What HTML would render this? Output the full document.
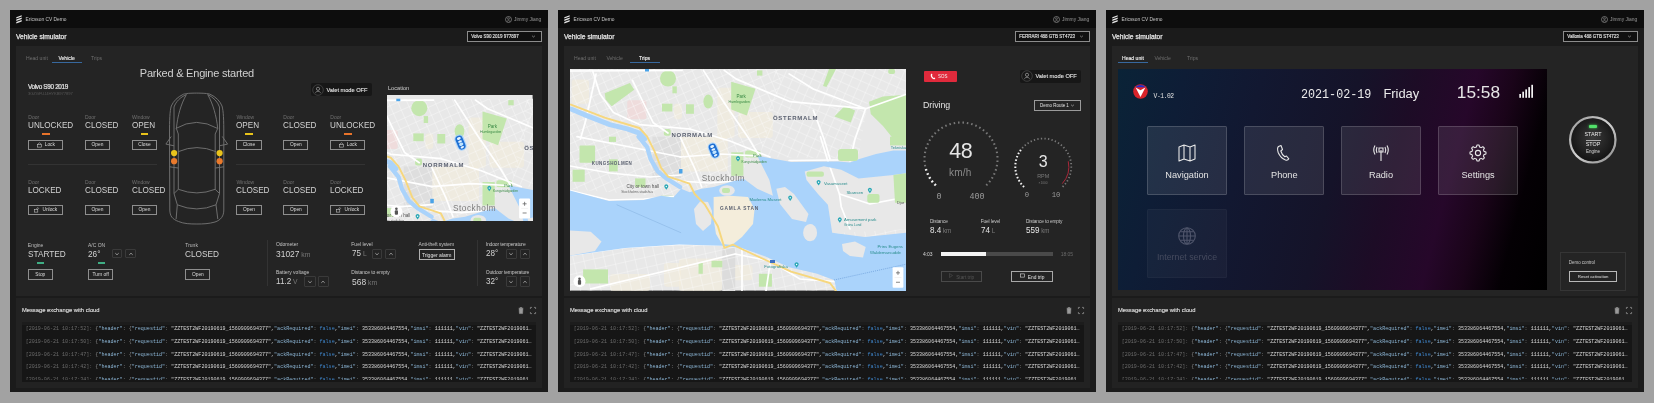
<!DOCTYPE html><html><head><meta charset="utf-8"><style>

*{margin:0;padding:0;box-sizing:border-box;-webkit-font-smoothing:antialiased}
html,body{width:1654px;height:403px;overflow:hidden;background:#a2a2a2;font-family:'Liberation Sans', sans-serif} .p{will-change:transform}
.p{position:absolute;top:10px;width:538px;height:382px;background:#1b1b1b;overflow:hidden}
.t{position:absolute;white-space:nowrap;line-height:1}
.r{position:absolute}
svg{position:absolute;overflow:visible} svg text{font-family:'Liberation Sans',sans-serif}
.btn{position:absolute;border:1px solid #9a9a9a;color:#ddd;font-size:4.3px;white-space:nowrap;display:flex;align-items:center;justify-content:center;line-height:1;padding-top:1.4px} .btn svg{position:relative !important;top:-0.9px}
.log{position:absolute;font-family:'Liberation Mono', monospace;font-size:5.05px;color:#d8d8d8;white-space:pre;line-height:7px}
.g{color:#6c6c6c} .k{color:#8cb6d6} .b{color:#3f86cc} .pu{color:#8a8a8a}

</style></head><body>
<div class="p" style="left:10px">
<div class="r" style="left:0px;top:0px;width:538px;height:18px;background:#0d0d0d"></div>
<svg style="left:6px;top:4.5px" width="6" height="9" viewBox="0 0 6 9"><path d="M0.3 2.2 L5.7 0.2 L5.7 1.6 L0.3 3.6Z M0.3 4.6 L5.7 2.6 L5.7 4.0 L0.3 6.0Z M0.3 7.0 L5.7 5.0 L5.7 6.4 L0.3 8.4Z" fill="#e6e6e6"/></svg>
<div class="t" style="left:15.6px;top:7.5px;font-size:4.85px;color:#c8c8c8;font-weight:normal;font-family:'Liberation Sans', sans-serif;">Ericsson CV Demo</div>
<svg style="left:494.8px;top:6.2px" width="7" height="7" viewBox="0 0 7 7"><circle cx="3.5" cy="3.5" r="3" fill="none" stroke="#9a9a9a" stroke-width="0.65"/><circle cx="3.5" cy="2.7" r="0.9" fill="none" stroke="#9a9a9a" stroke-width="0.55"/><path d="M2 5.3 Q3.5 3.9 5 5.3" fill="none" stroke="#9a9a9a" stroke-width="0.55"/></svg>
<div class="t" style="left:504px;top:7.8px;font-size:4.9px;color:#9a9a9a;font-weight:normal;font-family:'Liberation Sans', sans-serif;">Jimmy Jiang</div>
<div class="t" style="left:6px;top:23.9px;font-size:6.7px;color:#e4e4e4;font-weight:normal;font-family:'Liberation Sans', sans-serif;-webkit-text-stroke:0.25px #e4e4e4">Vehicle simulator</div>
<div class="r" style="left:457px;top:21.2px;width:75px;height:11.2px;background:#101010;border:1px solid #8c8c8c"></div>
<div class="t" style="left:461.3px;top:24.6px;font-size:4.5px;color:#e6e6e6;font-weight:normal;font-family:'Liberation Sans', sans-serif;-webkit-text-stroke:0.12px #e6e6e6;letter-spacing:-0.02px">Volvo S90 2019 977897</div>
<svg style="left:521px;top:25.2px" width="5" height="3" viewBox="0 0 5 3"><path d="M1.1 0.8 L2.5 2 L3.9 0.8" fill="none" stroke="#bbb" stroke-width="0.6"/></svg>
<div class="r" style="left:6px;top:36px;width:526px;height:250.3px;background:#242424"></div>
<div class="t" style="left:16px;top:45.6px;font-size:5.1px;color:#6e6e6e;font-weight:normal;font-family:'Liberation Sans', sans-serif;">Head unit</div>
<div class="t" style="left:48.4px;top:45.6px;font-size:5.1px;color:#f0f0f0;font-weight:normal;font-family:'Liberation Sans', sans-serif;-webkit-text-stroke:0.12px #f0f0f0">Vehicle</div>
<div class="r" style="left:41.599999999999994px;top:52.3px;width:30px;height:1.1px;background:#37689e"></div>
<div class="t" style="left:81px;top:45.6px;font-size:5.1px;color:#6e6e6e;font-weight:normal;font-family:'Liberation Sans', sans-serif;">Trips</div>
<div class="r" style="left:6px;top:288px;width:526px;height:90px;background:#222"></div>
<div class="t" style="left:11.9px;top:297.8px;font-size:5.8px;color:#dcdcdc;font-weight:normal;font-family:'Liberation Sans', sans-serif;-webkit-text-stroke:0.15px #dcdcdc">Message exchange with cloud</div>
<svg style="left:507.5px;top:296.8px" width="6" height="7" viewBox="0 0 6 7"><path d="M0.6 1.2 H5.4 M2.2 1.2 V0.5 H3.8 V1.2 M1.1 1.6 H4.9 L4.6 6.6 H1.4Z" fill="#9a9a9a" stroke="#9a9a9a" stroke-width="0.5"/></svg>
<svg style="left:520px;top:297px" width="6" height="7" viewBox="0 0 6 7"><path d="M0.4 2 V0.4 H2 M4 0.4 H5.6 V2 M5.6 5 V6.6 H4 M2 6.6 H0.4 V5" fill="none" stroke="#9a9a9a" stroke-width="0.7"/></svg>
<div class="r" style="left:12.3px;top:312.4px;width:513.3px;height:59.6px;background:#161616;overflow:hidden"></div>
<div class="r" style="left:12.3px;top:312.4px;width:513.3px;height:2.2px;background:#1c1c1c"></div>
<div class="log" style="left:15.7px;top:316.30px;width:506px;overflow:hidden"><span class="g">[2019-06-21 10:17:52]:</span> <span class="pu">{</span><span class="k">"header"</span><span class="pu">:</span> <span class="pu">{</span><span class="k">"requestid"</span><span class="pu">:</span> "ZZTEST2WF20190619_1560909694377",<span class="k">"ackRequired"</span><span class="pu">:</span> <span class="b">false</span>,<span class="k">"imei"</span><span class="pu">:</span> 353386064467554,<span class="k">"imsi"</span><span class="pu">:</span> 111111,<span class="k">"vin"</span><span class="pu">:</span> "ZZTEST2WF2019061…</div>
<div class="log" style="left:15.7px;top:328.95px;width:506px;overflow:hidden"><span class="g">[2019-06-21 10:17:50]:</span> <span class="pu">{</span><span class="k">"header"</span><span class="pu">:</span> <span class="pu">{</span><span class="k">"requestid"</span><span class="pu">:</span> "ZZTEST2WF20190619_1560909694377",<span class="k">"ackRequired"</span><span class="pu">:</span> <span class="b">false</span>,<span class="k">"imei"</span><span class="pu">:</span> 353386064467554,<span class="k">"imsi"</span><span class="pu">:</span> 111111,<span class="k">"vin"</span><span class="pu">:</span> "ZZTEST2WF2019061…</div>
<div class="log" style="left:15.7px;top:341.60px;width:506px;overflow:hidden"><span class="g">[2019-06-21 10:17:47]:</span> <span class="pu">{</span><span class="k">"header"</span><span class="pu">:</span> <span class="pu">{</span><span class="k">"requestid"</span><span class="pu">:</span> "ZZTEST2WF20190619_1560909694377",<span class="k">"ackRequired"</span><span class="pu">:</span> <span class="b">false</span>,<span class="k">"imei"</span><span class="pu">:</span> 353386064467554,<span class="k">"imsi"</span><span class="pu">:</span> 111111,<span class="k">"vin"</span><span class="pu">:</span> "ZZTEST2WF2019061…</div>
<div class="log" style="left:15.7px;top:354.25px;width:506px;overflow:hidden"><span class="g">[2019-06-21 10:17:42]:</span> <span class="pu">{</span><span class="k">"header"</span><span class="pu">:</span> <span class="pu">{</span><span class="k">"requestid"</span><span class="pu">:</span> "ZZTEST2WF20190619_1560909694377",<span class="k">"ackRequired"</span><span class="pu">:</span> <span class="b">false</span>,<span class="k">"imei"</span><span class="pu">:</span> 353386064467554,<span class="k">"imsi"</span><span class="pu">:</span> 111111,<span class="k">"vin"</span><span class="pu">:</span> "ZZTEST2WF2019061…</div>
<div class="log" style="left:15.7px;top:366.90px;width:506px;overflow:hidden"><span class="g">[2019-06-21 10:17:34]:</span> <span class="pu">{</span><span class="k">"header"</span><span class="pu">:</span> <span class="pu">{</span><span class="k">"requestid"</span><span class="pu">:</span> "ZZTEST2WF20190619_1560909694377",<span class="k">"ackRequired"</span><span class="pu">:</span> <span class="b">false</span>,<span class="k">"imei"</span><span class="pu">:</span> 353386064467554,<span class="k">"imsi"</span><span class="pu">:</span> 111111,<span class="k">"vin"</span><span class="pu">:</span> "ZZTEST2WF2019061…</div>
<div class="r" style="left:12.3px;top:369.5px;width:513.3px;height:2.5px;background:#161616"></div>
<div class="r" style="left:6px;top:372px;width:526px;height:6px;background:#222"></div>
<div class="t" style="left:129.8px;top:57.77px;font-size:11px;color:#d0d0d0;font-weight:normal;font-family:'Liberation Sans', sans-serif;letter-spacing:-0.22px">Parked &amp; Engine started</div>
<div class="r" style="left:300.6px;top:72.7px;width:61.2px;height:13.6px;background:#171717;border-radius:2px"></div>
<svg style="left:302px;top:73.5px" width="12" height="12" viewBox="0 0 12 12"><circle cx="6" cy="6" r="5.3" fill="none" stroke="#555" stroke-width="0.6"/><circle cx="6" cy="4.8" r="1.6" fill="none" stroke="#bbb" stroke-width="0.6"/><path d="M3.3 8.8 Q6 5.6 8.7 8.8" fill="none" stroke="#bbb" stroke-width="0.6"/></svg>
<div class="t" style="left:316.5px;top:77.66px;font-size:5.7px;color:#e4e4e4;font-weight:normal;font-family:'Liberation Sans', sans-serif;letter-spacing:-0.02px;-webkit-text-stroke:0.1px #e4e4e4">Valet mode OFF</div>
<div class="t" style="left:17.9px;top:73.67px;font-size:6.4px;color:#e4e4e4;font-weight:normal;font-family:'Liberation Sans', sans-serif;letter-spacing:-0.33px;-webkit-text-stroke:0.2px #e4e4e4">Volvo S90 2019</div>
<div class="t" style="left:18px;top:81.95px;font-size:4.2px;color:#555;font-weight:normal;font-family:'Liberation Sans', sans-serif;letter-spacing:-0.12px">3GZGFUJ4HYKB977897</div>
<div class="t" style="left:18.3px;top:105.15px;font-size:5.0px;color:#707070;font-weight:normal;font-family:'Liberation Sans', sans-serif;">Door</div>
<div class="t" style="left:18.3px;top:110.24px;font-size:9.7px;color:#d2d2d2;font-weight:normal;font-family:'Liberation Sans', sans-serif;transform:scaleX(0.84);transform-origin:0 0;">UNLOCKED</div>
<div class="r" style="left:31.9px;top:123.3px;width:7.8px;height:1.6px;background:#e8732a"></div>
<div class="btn" style="left:18.3px;top:129.6px;width:35px;height:10.8px;border-color:#8e8e8e;color:#dedede;font-size:4.8px"><svg style="position:static;margin-right:3px" width="5" height="5.5" viewBox="0 0 5 5.5"><rect x="0.6" y="2.3" width="3.8" height="2.8" fill="none" stroke="#ccc" stroke-width="0.55"/><path d="M1.4 2.3 V1.5 Q2.5 0 3.6 1.5 V2.3" fill="none" stroke="#ccc" stroke-width="0.55"/></svg><span>Lock</span></div>
<div class="t" style="left:74.9px;top:105.15px;font-size:5.0px;color:#707070;font-weight:normal;font-family:'Liberation Sans', sans-serif;">Door</div>
<div class="t" style="left:74.9px;top:110.24px;font-size:9.7px;color:#d2d2d2;font-weight:normal;font-family:'Liberation Sans', sans-serif;transform:scaleX(0.84);transform-origin:0 0;">CLOSED</div>
<div class="btn" style="left:74.9px;top:129.6px;width:25.2px;height:10.8px;border-color:#8e8e8e;color:#dedede;font-size:4.8px"><span>Open</span></div>
<div class="t" style="left:121.9px;top:105.15px;font-size:5.0px;color:#707070;font-weight:normal;font-family:'Liberation Sans', sans-serif;">Window</div>
<div class="t" style="left:121.9px;top:110.24px;font-size:9.7px;color:#d2d2d2;font-weight:normal;font-family:'Liberation Sans', sans-serif;transform:scaleX(0.84);transform-origin:0 0;">OPEN</div>
<div class="r" style="left:130.6px;top:123.3px;width:7.8px;height:1.6px;background:#e8c31a"></div>
<div class="btn" style="left:121.9px;top:129.6px;width:25.2px;height:10.8px;border-color:#8e8e8e;color:#dedede;font-size:4.8px"><span>Close</span></div>
<div class="t" style="left:226.4px;top:105.15px;font-size:5.0px;color:#707070;font-weight:normal;font-family:'Liberation Sans', sans-serif;">Window</div>
<div class="t" style="left:226.4px;top:110.24px;font-size:9.7px;color:#d2d2d2;font-weight:normal;font-family:'Liberation Sans', sans-serif;transform:scaleX(0.84);transform-origin:0 0;">OPEN</div>
<div class="r" style="left:235.1px;top:123.3px;width:7.8px;height:1.6px;background:#e8c31a"></div>
<div class="btn" style="left:226.4px;top:129.6px;width:25.2px;height:10.8px;border-color:#8e8e8e;color:#dedede;font-size:4.8px"><span>Close</span></div>
<div class="t" style="left:273.3px;top:105.15px;font-size:5.0px;color:#707070;font-weight:normal;font-family:'Liberation Sans', sans-serif;">Door</div>
<div class="t" style="left:273.3px;top:110.24px;font-size:9.7px;color:#d2d2d2;font-weight:normal;font-family:'Liberation Sans', sans-serif;transform:scaleX(0.84);transform-origin:0 0;">CLOSED</div>
<div class="btn" style="left:273.3px;top:129.6px;width:25.2px;height:10.8px;border-color:#8e8e8e;color:#dedede;font-size:4.8px"><span>Open</span></div>
<div class="t" style="left:320.3px;top:105.15px;font-size:5.0px;color:#707070;font-weight:normal;font-family:'Liberation Sans', sans-serif;">Door</div>
<div class="t" style="left:320.3px;top:110.24px;font-size:9.7px;color:#d2d2d2;font-weight:normal;font-family:'Liberation Sans', sans-serif;transform:scaleX(0.84);transform-origin:0 0;">UNLOCKED</div>
<div class="r" style="left:333.90000000000003px;top:123.3px;width:7.8px;height:1.6px;background:#e8732a"></div>
<div class="btn" style="left:320.3px;top:129.6px;width:35px;height:10.8px;border-color:#8e8e8e;color:#dedede;font-size:4.8px"><svg style="position:static;margin-right:3px" width="5" height="5.5" viewBox="0 0 5 5.5"><rect x="0.6" y="2.3" width="3.8" height="2.8" fill="none" stroke="#ccc" stroke-width="0.55"/><path d="M1.4 2.3 V1.5 Q2.5 0 3.6 1.5 V2.3" fill="none" stroke="#ccc" stroke-width="0.55"/></svg><span>Lock</span></div>
<div class="t" style="left:18.3px;top:170.45px;font-size:5.0px;color:#707070;font-weight:normal;font-family:'Liberation Sans', sans-serif;">Door</div>
<div class="t" style="left:18.3px;top:175.14px;font-size:9.7px;color:#d2d2d2;font-weight:normal;font-family:'Liberation Sans', sans-serif;transform:scaleX(0.84);transform-origin:0 0;">LOCKED</div>
<div class="btn" style="left:18.3px;top:194.5px;width:35px;height:10.8px;border-color:#8e8e8e;color:#dedede;font-size:4.8px"><svg style="position:static;margin-right:3px" width="5" height="5.5" viewBox="0 0 5 5.5"><rect x="0.4" y="2.3" width="3.4" height="2.8" fill="none" stroke="#ccc" stroke-width="0.55"/><path d="M2.8 2.3 V1.3 Q3.7 0 4.7 1.3 V1.8" fill="none" stroke="#ccc" stroke-width="0.55"/></svg><span>Unlock</span></div>
<div class="t" style="left:74.9px;top:170.45px;font-size:5.0px;color:#707070;font-weight:normal;font-family:'Liberation Sans', sans-serif;">Door</div>
<div class="t" style="left:74.9px;top:175.14px;font-size:9.7px;color:#d2d2d2;font-weight:normal;font-family:'Liberation Sans', sans-serif;transform:scaleX(0.84);transform-origin:0 0;">CLOSED</div>
<div class="btn" style="left:74.9px;top:194.5px;width:25.2px;height:10.8px;border-color:#8e8e8e;color:#dedede;font-size:4.8px"><span>Open</span></div>
<div class="t" style="left:121.9px;top:170.45px;font-size:5.0px;color:#707070;font-weight:normal;font-family:'Liberation Sans', sans-serif;">Window</div>
<div class="t" style="left:121.9px;top:175.14px;font-size:9.7px;color:#d2d2d2;font-weight:normal;font-family:'Liberation Sans', sans-serif;transform:scaleX(0.84);transform-origin:0 0;">CLOSED</div>
<div class="btn" style="left:121.9px;top:194.5px;width:25.2px;height:10.8px;border-color:#8e8e8e;color:#dedede;font-size:4.8px"><span>Open</span></div>
<div class="t" style="left:226.4px;top:170.45px;font-size:5.0px;color:#707070;font-weight:normal;font-family:'Liberation Sans', sans-serif;">Window</div>
<div class="t" style="left:226.4px;top:175.14px;font-size:9.7px;color:#d2d2d2;font-weight:normal;font-family:'Liberation Sans', sans-serif;transform:scaleX(0.84);transform-origin:0 0;">CLOSED</div>
<div class="btn" style="left:226.4px;top:194.5px;width:25.2px;height:10.8px;border-color:#8e8e8e;color:#dedede;font-size:4.8px"><span>Open</span></div>
<div class="t" style="left:273.3px;top:170.45px;font-size:5.0px;color:#707070;font-weight:normal;font-family:'Liberation Sans', sans-serif;">Door</div>
<div class="t" style="left:273.3px;top:175.14px;font-size:9.7px;color:#d2d2d2;font-weight:normal;font-family:'Liberation Sans', sans-serif;transform:scaleX(0.84);transform-origin:0 0;">CLOSED</div>
<div class="btn" style="left:273.3px;top:194.5px;width:25.2px;height:10.8px;border-color:#8e8e8e;color:#dedede;font-size:4.8px"><span>Open</span></div>
<div class="t" style="left:320.3px;top:170.45px;font-size:5.0px;color:#707070;font-weight:normal;font-family:'Liberation Sans', sans-serif;">Door</div>
<div class="t" style="left:320.3px;top:175.14px;font-size:9.7px;color:#d2d2d2;font-weight:normal;font-family:'Liberation Sans', sans-serif;transform:scaleX(0.84);transform-origin:0 0;">LOCKED</div>
<div class="btn" style="left:320.3px;top:194.5px;width:35px;height:10.8px;border-color:#8e8e8e;color:#dedede;font-size:4.8px"><svg style="position:static;margin-right:3px" width="5" height="5.5" viewBox="0 0 5 5.5"><rect x="0.4" y="2.3" width="3.4" height="2.8" fill="none" stroke="#ccc" stroke-width="0.55"/><path d="M2.8 2.3 V1.3 Q3.7 0 4.7 1.3 V1.8" fill="none" stroke="#ccc" stroke-width="0.55"/></svg><span>Unlock</span></div>
<div class="r" style="left:18.3px;top:153.6px;width:128.7px;height:0.7px;background:#333"></div>
<div class="r" style="left:226.4px;top:153.6px;width:128.7px;height:0.7px;background:#333"></div>
<svg style="left:153px;top:82px" width="66" height="134" viewBox="0 0 66 134">
<g fill="none" stroke="#727272" stroke-width="0.95" stroke-linejoin="round">
<path d="M33.5 1.1 C40 1.1 45 1.5 47 2.2 C53 5 57 9 59 14 C60.5 19 60.8 28 60.8 42 L60.8 118 C60.8 124 58 128 52 130 C46 131.8 40 132 33.9 132 C27 132 21 131.8 15.5 129.5 C9 127 7 124 6.8 118 L6.5 42 C6.5 28 6.8 19 8.3 14 C10.5 9 14.5 5 20.5 2.2 C22.5 1.5 27 1.1 33.5 1.1 Z"/>
<path d="M11 101.5 L11 15 C13 9.5 17 5.5 23.4 2.5"/><path d="M56.5 101.5 L56.5 15 C54.5 9.5 50.5 5.5 44.7 2.5"/>
<path d="M23.4 2.5 C18 12 14.5 24 13.4 36.5"/><path d="M44.7 2.5 C50 12 53.5 24 54.7 36.5"/>
<path d="M12.8 36.5 Q33.5 24.3 54.7 36.5"/>
<path d="M15.2 59.7 Q33.8 51.5 53.1 59.7"/>
<path d="M13.4 36.5 L15.3 42 L15.3 97.3"/><path d="M54.7 36.5 L52.2 42 L52.2 97.3"/>
<path d="M15.3 97.3 Q33.9 104.5 52.2 97.3"/>
<path d="M15.3 97.3 L11 101.5 L14.3 112.8 L13.1 127.1"/><path d="M52.2 97.3 L56.5 101.5 L53 112.8 L54.8 127.1"/>
<path d="M14.3 112.8 Q33.9 121 53 112.8"/>
<path d="M8.2 44.5 L2.9 52.1 L11.1 53.8"/><path d="M59.3 44.5 L64.6 52.1 L56.4 53.8"/>
<path d="M6.8 74.8 Q11 75.5 15.2 76"/><path d="M60.8 74.8 Q56.5 75.5 52.3 76"/>
</g>
<circle cx="11.1" cy="61.1" r="3.1" fill="#e9c31c"/><circle cx="56.6" cy="61.1" r="3.1" fill="#e9c31c"/>
<circle cx="11.1" cy="69.2" r="3.1" fill="#ea7a2c"/><circle cx="56.6" cy="69.2" r="3.1" fill="#ea7a2c"/>
</svg>
<div class="t" style="left:378px;top:75.67px;font-size:5.6px;color:#cfcfcf;font-weight:normal;font-family:'Liberation Sans', sans-serif;">Location</div>
<svg style="left:377.4px;top:85px;overflow:hidden" width="145.6" height="126" viewBox="0 0 145.6 126"><rect width="145.6" height="126" fill="#e8e8e8"/><g transform="translate(-65.7,3.7)"><defs><pattern id="m1g2a" patternUnits="userSpaceOnUse" width="8.5" height="8.5" patternTransform="rotate(-24)"><path d="M0 0 H8.5 M0 0 V8.5" stroke="#fafafa" stroke-width="0.8" fill="none"/></pattern><pattern id="m1g2b" patternUnits="userSpaceOnUse" width="9" height="9" patternTransform="rotate(24)"><path d="M0 0 H9 M0 0 V9" stroke="#fafafa" stroke-width="0.8" fill="none"/></pattern><pattern id="m1g2c" patternUnits="userSpaceOnUse" width="10" height="10" patternTransform="rotate(10)"><path d="M0 0 H10 M0 0 V10" stroke="#fafafa" stroke-width="0.8" fill="none"/></pattern><pattern id="m1g2d" patternUnits="userSpaceOnUse" width="10" height="10" patternTransform="rotate(-13)"><path d="M0 0 H10 M0 0 V10" stroke="#fafafa" stroke-width="0.8" fill="none"/></pattern><clipPath id="m1c2a"><polygon points="0,0 215,0 190,88 150,115 100,128 0,120"/></clipPath><clipPath id="m1c2b"><polygon points="205,0 337,0 337,26 298,33 288,90 190,88"/></clipPath><clipPath id="m1c2d"><polygon points="0,180 337,160 337,222 0,222"/></clipPath></defs><rect width="336" height="221.6" fill="#e8e8e8"/><rect x="147.3" y="18.8" width="17.30" height="50.30" fill="#f4eddb" rx="3" opacity="0.6"/><rect x="168.1" y="43.1" width="34.70" height="26.00" fill="#f4eddb" rx="3" opacity="0.6"/><rect x="110" y="67.7" width="47.70" height="34.70" fill="#f4eddb" rx="3" opacity="0.6"/><rect x="104" y="34.7" width="8.00" height="15.60" fill="#f4eddb" rx="3" opacity="0.6"/><rect x="1.7" y="10.4" width="17.30" height="24.30" fill="#f4eddb" rx="3" opacity="0.6"/><rect x="94" y="194" width="17.00" height="23.70" fill="#f4eddb" rx="3" opacity="0.6"/><rect x="109" y="189.6" width="43.00" height="32.40" fill="#f4eddb" rx="3" opacity="0.6"/><rect x="160.9" y="196.1" width="21.60" height="15.10" fill="#f4eddb" rx="3" opacity="0.6"/><rect x="40" y="205" width="40.00" height="17.00" fill="#f4eddb" rx="3" opacity="0.6"/><rect x="57.3" y="31.2" width="19.10" height="19.10" fill="#efdcdc" rx="2"/><rect x="82.4" y="67.7" width="28.60" height="41.70" fill="#dedede" /><rect x="152.3" y="178.9" width="12.90" height="43.10" fill="#dcdcdc" /><rect width="336" height="221.6" fill="url(#m1g2a)" clip-path="url(#m1c2a)"/><rect width="336" height="221.6" fill="url(#m1g2b)" clip-path="url(#m1c2b)"/><rect width="336" height="221.6" fill="url(#m1g2d)" clip-path="url(#m1c2d)"/><polygon points="34.7,24.3 59.9,13.9 64.2,20.8 41.7,37.3 35.6,30.4" fill="#c3e6ad" /><circle cx="98" cy="9.5" r="8" fill="#c3e6ad"/><rect x="102.4" y="17.4" width="4.40" height="6.90" fill="#c3e6ad" /><rect x="92" y="34.7" width="10.40" height="7.80" fill="#c3e6ad" /><rect x="93.8" y="59.9" width="6.90" height="6.90" fill="#c3e6ad" rx="2"/><polygon points="161.2,12.7 185.5,19.7 176.8,46.6 161.2,40.5" fill="#c3e6ad" /><ellipse cx="138.2" cy="32.6" rx="4.8" ry="7" fill="#c3e6ad"/><rect x="116" y="35.3" width="7.90" height="9.50" fill="#c3e6ad" /><rect x="187" y="1.4" width="5.40" height="5.20" fill="#c3e6ad" /><polygon points="299,32.7 312.9,27.5 337,25.8 337,70 323.4,70 313,57 300.8,44.9" fill="#c3e6ad" /><polygon points="274.7,37.1 285.1,41.4 280.8,53.6 264.3,47.5" fill="#c3e6ad" /><polygon points="259,0 266,0 256.5,18 253,17.1" fill="#c3e6ad" /><rect x="318.2" y="0" width="6.90" height="5.00" fill="#c3e6ad" rx="2"/><rect x="9.5" y="76.4" width="15.60" height="17.30" fill="#c3e6ad" rx="1"/><rect x="2.6" y="100.7" width="12.10" height="12.10" fill="#c3e6ad" /><rect x="39" y="90.3" width="8.70" height="12.10" fill="#c3e6ad" /><rect x="65.1" y="109.4" width="10.40" height="8.70" fill="#c3e6ad" /><rect x="39" y="67.7" width="7.00" height="5.20" fill="#c3e6ad" /><rect x="91.1" y="126.7" width="12.20" height="3.50" fill="#c3e6ad" /><rect x="161.2" y="83.3" width="12.20" height="23.50" fill="#c3e6ad" /><rect x="175.1" y="81.6" width="15.60" height="6.90" fill="#c3e6ad" rx="2"/><rect x="320" y="67.7" width="17.00" height="8.70" fill="#c3e6ad" /><rect x="13.1" y="200.4" width="24.90" height="14.10" fill="#c3e6ad" /><rect x="128.5" y="194" width="4.30" height="10.80" fill="#c3e6ad" /><rect x="141.5" y="191.8" width="10.80" height="6.50" fill="#c3e6ad" /><rect x="188.9" y="204.8" width="13.00" height="12.90" fill="#c3e6ad" /><polyline points="0,2 112,1.5" fill="none" stroke="#ffffff" stroke-width="1.7" stroke-linejoin="round" stroke-linecap="round" /><polyline points="22.6,1.7 30,25 43.4,43.4 69.4,55.6 90.3,57.3 120,60" fill="none" stroke="#ffffff" stroke-width="1.7" stroke-linejoin="round" stroke-linecap="round" /><polyline points="26,5.2 15.6,52 10.4,70" fill="none" stroke="#ffffff" stroke-width="1.7" stroke-linejoin="round" stroke-linecap="round" /><polyline points="62.5,11.3 76.4,40 83.3,53.8 98,64" fill="none" stroke="#ffffff" stroke-width="1.7" stroke-linejoin="round" stroke-linecap="round" /><polyline points="133.4,1.4 155,35 178.5,69.1 190,88" fill="none" stroke="#ffffff" stroke-width="1.7" stroke-linejoin="round" stroke-linecap="round" /><polyline points="154.2,1.4 166.4,10.1 220.2,32.7 295.6,39.7" fill="none" stroke="#ffffff" stroke-width="1.7" stroke-linejoin="round" stroke-linecap="round" /><polyline points="219.1,4.9 243.4,20 295.6,39.7 337,25" fill="none" stroke="#ffffff" stroke-width="1.7" stroke-linejoin="round" stroke-linecap="round" /><polyline points="243.4,41.4 253.9,69.7 260,90" fill="none" stroke="#ffffff" stroke-width="1.7" stroke-linejoin="round" stroke-linecap="round" /><polyline points="295.6,39.7 285.1,69.7 280,92" fill="none" stroke="#ffffff" stroke-width="1.7" stroke-linejoin="round" stroke-linecap="round" /><polyline points="0,97 40,104 80,108 111,106" fill="none" stroke="#ffffff" stroke-width="1.7" stroke-linejoin="round" stroke-linecap="round" /><polyline points="7,67.7 60,78 111,88" fill="none" stroke="#ffffff" stroke-width="1.7" stroke-linejoin="round" stroke-linecap="round" /><polyline points="0,121.5 39,131 73.8,130 103.3,127.5" fill="none" stroke="#ffffff" stroke-width="1.7" stroke-linejoin="round" stroke-linecap="round" /><polyline points="120,60 160,72 200,88" fill="none" stroke="#ffffff" stroke-width="1.7" stroke-linejoin="round" stroke-linecap="round" /><polyline points="110,88 150,85 187,86.8" fill="none" stroke="#ffffff" stroke-width="1.7" stroke-linejoin="round" stroke-linecap="round" /><polyline points="109,112 140,114 165,112" fill="none" stroke="#ffffff" stroke-width="1.7" stroke-linejoin="round" stroke-linecap="round" /><polyline points="219.1,91.5 267.8,91" fill="none" stroke="#ffffff" stroke-width="1.7" stroke-linejoin="round" stroke-linecap="round" /><polyline points="250.4,67.7 257.3,90.3 269.5,125.1 271.2,137.7 280,160" fill="none" stroke="#ffffff" stroke-width="1.7" stroke-linejoin="round" stroke-linecap="round" /><polyline points="269.5,125 300,135 337,128" fill="none" stroke="#ffffff" stroke-width="1.7" stroke-linejoin="round" stroke-linecap="round" /><polyline points="2.3,186 55.2,178.5 111.1,175.2 152,176" fill="none" stroke="#ffffff" stroke-width="1.7" stroke-linejoin="round" stroke-linecap="round" /><polyline points="20.7,219.9 111.1,198.3 165,185" fill="none" stroke="#ffffff" stroke-width="1.7" stroke-linejoin="round" stroke-linecap="round" /><polyline points="165.2,185 200,192 230,210 337,218" fill="none" stroke="#ffffff" stroke-width="1.7" stroke-linejoin="round" stroke-linecap="round" /><polyline points="172,178 172,222" fill="none" stroke="#ffffff" stroke-width="1.7" stroke-linejoin="round" stroke-linecap="round" /><polyline points="200,195 196,222" fill="none" stroke="#ffffff" stroke-width="1.7" stroke-linejoin="round" stroke-linecap="round" /><polyline points="110,67.7 125,100 131.7,118" fill="none" stroke="#ffffff" stroke-width="1.7" stroke-linejoin="round" stroke-linecap="round" /><polyline points="143.8,120 155,140 172,168" fill="none" stroke="#ffffff" stroke-width="1.7" stroke-linejoin="round" stroke-linecap="round" /><polygon points="0,121.5 20,127 39,132 73.8,131.1 91.1,126.7 103.3,128.5 111.1,119.8 119.5,123.3 131.7,119.8 143.8,118.1 161.2,112.8 173.4,109.4 187.2,119.8 202.9,126.7 199.4,111.1 190.7,93.7 187.2,86.8 221.1,92.9 267.8,92.5 280,93.5 288.6,90.3 306,85.1 323.4,81.6 337,81.6 337,104.2 323.4,105.9 306,107.7 288.6,109.4 271.2,100.7 253.9,97.2 234.7,102.5 236.5,111.1 248,125 257.9,135.7 262.2,163.7 294.6,168 314,165.9 337,163.7 337,222 266.6,222 264.4,211.2 247.1,204.7 219.1,198.3 195.4,187.5 171.7,178.9 152.3,176.7 109.1,175.6 55.2,178.9 2.3,186.4 0,186.4" fill="#aad3fb" /><polyline points="68.5,67.7 77.2,78.1 80.7,90.3 87.7,102.4 96.3,109.4 110.2,118.1" fill="none" stroke="#aad3fb" stroke-width="4.3" stroke-linejoin="round" stroke-linecap="round" /><polyline points="0.9,40 17.4,46.9 39.9,55.6 57.3,59.9 69.4,64.2 74.7,70" fill="none" stroke="#aad3fb" stroke-width="5" stroke-linejoin="round" stroke-linecap="round" /><polygon points="0,161.6 20.7,162.7 31.5,172.4 25,182.1 7.7,185.3 0,186.4" fill="#e8e8e8" /><polygon points="124,140 130,132.5 138,133 142,142 141,155 133,162 126,155" fill="#e8e8e8" /><ellipse cx="157" cy="121.5" rx="7.8" ry="5.2" fill="#e8e8e8"/><rect x="152" y="119" width="8.00" height="5.00" fill="#c3e6ad" rx="2"/><polygon points="143.6,128 160,126.7 178,128 184.6,140 183,155 172,168 162,176 152,175 146,165 143.6,150" fill="#f4eddb" /><polygon points="206.3,119.8 215,118 224,125 238.5,145 236,153 222,150 210,135" fill="#e8e8e8" /><ellipse cx="240.1" cy="163.7" rx="7" ry="8.6" fill="#e8e8e8"/><polygon points="272,175 285,172.4 295.7,178 293,188.5 280,187 273,182" fill="#e8e8e8" /><rect x="236.5" y="102.5" width="17.40" height="5.20" fill="#c3e6ad" rx="2"/><rect x="297.3" y="125.1" width="12.20" height="8.60" fill="#c3e6ad" rx="2"/><polygon points="323.4,106 337,104.2 337,133.7 325,133.7" fill="#c3e6ad" /><rect x="268" y="80" width="20.00" height="12.00" fill="#c3e6ad" rx="3"/><polyline points="0.9,35.6 34.7,48.6 69.4,59 77.2,67.7 84.2,81.6 91.1,98.9 98.1,107.6 109.1,111.1 119.5,114.6 124.7,125 135,135.7 147.9,157.3 154.4,178.9 163,175.6 173.8,181 221.1,202.6 260,214 266,222" fill="none" stroke="#f6d77e" stroke-width="1.9" stroke-linejoin="round" stroke-linecap="round" /><path d="M46.6 135.7 L111.1 163.8" stroke="#7aa6d6" stroke-width="0.4" fill="none"/><path d="M264 211 L337 195" stroke="#5a8fd0" stroke-width="0.6" stroke-dasharray="1 1" fill="none"/><text x="101.5" y="68" font-family="Liberation Sans" font-size="6.0" fill="#5b6170" font-weight="bold" letter-spacing="0.75" text-anchor="start">NORRMALM</text><text x="21.7" y="96.4" font-family="Liberation Sans" font-size="4.5" fill="#5b6170" font-weight="bold" letter-spacing="0.45" text-anchor="start">KUNGSHOLMEN</text><text x="202.9" y="51.4" font-family="Liberation Sans" font-size="6.0" fill="#5b6170" font-weight="bold" letter-spacing="0.75" text-anchor="start">ÖSTERMALM</text><text x="131.7" y="112.5" font-family="Liberation Sans" font-size="8.2" fill="#7b7b7b" font-weight="normal" letter-spacing="0.55" text-anchor="start">Stockholm</text><text x="150.1" y="140.8" font-family="Liberation Sans" font-size="4.8" fill="#5b6170" font-weight="bold" letter-spacing="0.75" text-anchor="start">GAMLA STAN</text><text x="166.4" y="29.5" font-family="Liberation Sans" font-size="4.6" fill="#3a8a45" font-weight="normal" letter-spacing="0" text-anchor="start">Park</text><text x="158.6" y="34.2" font-family="Liberation Sans" font-size="3.6" fill="#3a8a45" font-weight="normal" letter-spacing="0" text-anchor="start">Humlegården</text><text x="182.9" y="88.4" font-family="Liberation Sans" font-size="4.2" fill="#3a8a45" font-weight="normal" letter-spacing="0" text-anchor="start">Park</text><text x="171.6" y="93.6" font-family="Liberation Sans" font-size="3.3" fill="#3a8a45" font-weight="normal" letter-spacing="0" text-anchor="start">Kungsträdgården</text><text x="56.4" y="118.8" font-family="Liberation Sans" font-size="4.6" fill="#555" font-weight="normal" letter-spacing="0" text-anchor="start">City or town hall</text><text x="51.2" y="123.6" font-family="Liberation Sans" font-size="3.4" fill="#666" font-weight="normal" letter-spacing="0" text-anchor="start">Stockholms stadshus</text><text x="179.4" y="131.8" font-family="Liberation Sans" font-size="4.3" fill="#2a8d8d" font-weight="normal" letter-spacing="0" text-anchor="start">Moderna Museet</text><text x="253.9" y="116.2" font-family="Liberation Sans" font-size="4.3" fill="#2a8d8d" font-weight="normal" letter-spacing="0" text-anchor="start">Vasamuseet</text><text x="276.5" y="124.6" font-family="Liberation Sans" font-size="4.3" fill="#2a8d8d" font-weight="normal" letter-spacing="0" text-anchor="start">Skansen</text><text x="274.1" y="152.4" font-family="Liberation Sans" font-size="4.3" fill="#2a8d8d" font-weight="normal" letter-spacing="0" text-anchor="start">Amusement park</text><text x="274" y="156.8" font-family="Liberation Sans" font-size="3.3" fill="#2a8d8d" font-weight="normal" letter-spacing="0" text-anchor="start">Gröna Lund</text><text x="307.5" y="178.8" font-family="Liberation Sans" font-size="4.3" fill="#2a8d8d" font-weight="normal" letter-spacing="0" text-anchor="start">Prins Eugens</text><text x="300" y="184.8" font-family="Liberation Sans" font-size="4.3" fill="#2a8d8d" font-weight="normal" letter-spacing="0" text-anchor="start">Waldemarsudde</text><text x="194.3" y="198.8" font-family="Liberation Sans" font-size="4.3" fill="#2a8d8d" font-weight="normal" letter-spacing="0" text-anchor="start">Fotografiska</text><text x="320.8" y="80.5" font-family="Liberation Sans" font-size="4" fill="#2a8d8d" font-weight="normal" letter-spacing="0" text-anchor="start">Tekniska</text><text x="326.9" y="135.3" font-family="Liberation Sans" font-size="4" fill="#555" font-weight="normal" letter-spacing="0" text-anchor="start">Djur</text><path d="M96.3 120.69999999999999 L94.7 118.5 A2 2 0 1 1 97.89999999999999 118.5 Z" fill="#2aa7b5"/><circle cx="96.3" cy="117.5" r="0.7" fill="#fff"/><path d="M220.2 131.9 L218.6 129.70000000000002 A2 2 0 1 1 221.79999999999998 129.70000000000002 Z" fill="#2aa7b5"/><circle cx="220.2" cy="128.70000000000002" r="0.7" fill="#fff"/><path d="M248.6 116.39999999999999 L247.0 114.2 A2 2 0 1 1 250.2 114.2 Z" fill="#2aa7b5"/><circle cx="248.6" cy="113.2" r="0.7" fill="#fff"/><path d="M299.9 124.19999999999999 L298.29999999999995 122.0 A2 2 0 1 1 301.5 122.0 Z" fill="#2aa7b5"/><circle cx="299.9" cy="121.0" r="0.7" fill="#fff"/><path d="M269.8 153.79999999999998 L268.2 151.6 A2 2 0 1 1 271.40000000000003 151.6 Z" fill="#2aa7b5"/><circle cx="269.8" cy="150.6" r="0.7" fill="#fff"/><path d="M226.6 198.7 L225.0 196.5 A2 2 0 1 1 228.2 196.5 Z" fill="#2aa7b5"/><circle cx="226.6" cy="195.5" r="0.7" fill="#fff"/><path d="M168 92.6 L166.4 90.4 A2 2 0 1 1 169.6 90.4 Z" fill="#2aa7b5"/><circle cx="168" cy="89.4" r="0.7" fill="#fff"/><rect x="109" y="100" width="3.50" height="4.50" fill="#4aa3e8" rx="0.5"/><rect x="75" y="0" width="4.00" height="2.50" fill="#4aa3e8" /><rect x="200" y="191" width="5.00" height="3.00" fill="#3f6fc0" /></g><g transform="translate(73.5,47.6) rotate(-22) scale(1.0)"><rect x="-4.8" y="-8.3" width="9.6" height="16.6" rx="4.6" fill="#9fd0ff" opacity="0.85"/><rect x="-3.7" y="-7.2" width="7.4" height="14.4" rx="3.6" fill="#1f6fd2"/><ellipse cx="0" cy="-4.4" rx="2" ry="1.3" fill="#e6f4ff"/><ellipse cx="0" cy="-1.2" rx="2" ry="1.1" fill="#e6f4ff"/><ellipse cx="0" cy="1.8" rx="2.2" ry="1.6" fill="#bfe4ff"/><ellipse cx="0" cy="5" rx="1.8" ry="1" fill="#e6f4ff"/></g><circle cx="9.4" cy="116.4" r="6" fill="#fff"/><circle cx="9.4" cy="113.80000000000001" r="1.3" fill="#555"/><rect x="7.800000000000001" y="115.2" width="3.2" height="4.6" rx="1" fill="#555"/><rect x="132.1" y="103.4" width="11" height="20" rx="1" fill="#fff"/><path d="M135.6 108.80000000000001 h4 M137.6 106.80000000000001 v4 M135.6 118.0 h4" stroke="#666" stroke-width="0.8"/><path d="M134.1 113.4 h7" stroke="#e6e6e6" stroke-width="0.5"/></svg>
<div class="t" style="left:17.8px;top:232.65px;font-size:5.0px;color:#bdbdbd;font-weight:normal;font-family:'Liberation Sans', sans-serif;">Engine</div>
<div class="t" style="left:17.8px;top:238.95px;font-size:9.6px;color:#d2d2d2;font-weight:normal;font-family:'Liberation Sans', sans-serif;transform:scaleX(0.86);transform-origin:0 0;">STARTED</div>
<div class="r" style="left:26.5px;top:252.0px;width:7.6px;height:1.6px;background:#3fae84"></div>
<div class="btn" style="left:17.8px;top:258.8px;width:25px;height:10.9px;border-color:#8e8e8e;color:#dedede;font-size:4.8px"><span>Stop</span></div>
<div class="t" style="left:78px;top:232.65px;font-size:5.0px;color:#bdbdbd;font-weight:normal;font-family:'Liberation Sans', sans-serif;">A/C ON</div>
<div class="t" style="left:78px;top:238.95px;font-size:9.6px;color:#d2d2d2;font-weight:normal;font-family:'Liberation Sans', sans-serif;transform:scaleX(0.86);transform-origin:0 0;">26°</div>
<div class="r" style="left:101.9px;top:239px;width:10.4px;height:9.3px;border:1px solid #3a3a3a;border-radius:1px"></div><svg style="left:107.10000000000001px;top:243.65px" width="1" height="1"><path d="M-1.7 -0.8 L0 0.8 L1.7 -0.8" fill="none" stroke="#b8b8b8" stroke-width="0.75"/></svg>
<div class="r" style="left:115.4px;top:239px;width:10.8px;height:9.3px;border:1px solid #3a3a3a;border-radius:1px"></div><svg style="left:120.80000000000001px;top:243.65px" width="1" height="1"><path d="M-1.7 0.8 L0 -0.8 L1.7 0.8" fill="none" stroke="#b8b8b8" stroke-width="0.75"/></svg>
<div class="r" style="left:87.6px;top:252.0px;width:7.3px;height:1.6px;background:#3fae84"></div>
<div class="btn" style="left:78px;top:258.8px;width:25.3px;height:10.9px;border-color:#8e8e8e;color:#dedede;font-size:4.8px"><span>Turn off</span></div>
<div class="t" style="left:175.3px;top:232.65px;font-size:5.0px;color:#bdbdbd;font-weight:normal;font-family:'Liberation Sans', sans-serif;">Trunk</div>
<div class="t" style="left:175.3px;top:238.95px;font-size:9.6px;color:#d2d2d2;font-weight:normal;font-family:'Liberation Sans', sans-serif;transform:scaleX(0.86);transform-origin:0 0;">CLOSED</div>
<div class="btn" style="left:175.3px;top:258.8px;width:25.2px;height:10.9px;border-color:#8e8e8e;color:#dedede;font-size:4.8px"><span>Open</span></div>
<div class="r" style="left:257.3px;top:229.8px;width:0.6px;height:46px;background:#333"></div>
<div class="r" style="left:467.4px;top:229.8px;width:0.6px;height:46px;background:#333"></div>
<div class="t" style="left:265.9px;top:232.15px;font-size:5.0px;color:#c4c4c4;font-weight:normal;font-family:'Liberation Sans', sans-serif;">Odometer</div>
<div class="t" style="left:266px;top:239.38px;font-size:9.4px;color:#d2d2d2;font-weight:normal;font-family:'Liberation Sans', sans-serif;transform:scaleX(0.9);transform-origin:0 0;">31027<span style="font-size:7.6px;color:#777"> km</span></div>
<div class="t" style="left:265.9px;top:259.65px;font-size:5.0px;color:#c4c4c4;font-weight:normal;font-family:'Liberation Sans', sans-serif;">Battery voltage</div>
<div class="t" style="left:266px;top:266.83px;font-size:9.0px;color:#d2d2d2;font-weight:normal;font-family:'Liberation Sans', sans-serif;transform:scaleX(0.9);transform-origin:0 0;">11.2<span style="font-size:7.5px;color:#777"> V</span></div>
<div class="r" style="left:294px;top:266.3px;width:11.8px;height:10.4px;border:1px solid #3a3a3a;border-radius:1px"></div><svg style="left:299.9px;top:271.5px" width="1" height="1"><path d="M-1.7 -0.8 L0 0.8 L1.7 -0.8" fill="none" stroke="#b8b8b8" stroke-width="0.75"/></svg>
<div class="r" style="left:307.9px;top:266.3px;width:11.1px;height:10.4px;border:1px solid #3a3a3a;border-radius:1px"></div><svg style="left:313.45px;top:271.5px" width="1" height="1"><path d="M-1.7 0.8 L0 -0.8 L1.7 0.8" fill="none" stroke="#b8b8b8" stroke-width="0.75"/></svg>
<div class="t" style="left:341.3px;top:232.15px;font-size:5.0px;color:#c4c4c4;font-weight:normal;font-family:'Liberation Sans', sans-serif;">Fuel level</div>
<div class="t" style="left:341.5px;top:239.43px;font-size:9.0px;color:#d2d2d2;font-weight:normal;font-family:'Liberation Sans', sans-serif;transform:scaleX(0.9);transform-origin:0 0;">75<span style="font-size:7.5px;color:#777"> L</span></div>
<div class="r" style="left:361.7px;top:238.5px;width:10.8px;height:10.4px;border:1px solid #3a3a3a;border-radius:1px"></div><svg style="left:367.09999999999997px;top:243.7px" width="1" height="1"><path d="M-1.7 -0.8 L0 0.8 L1.7 -0.8" fill="none" stroke="#b8b8b8" stroke-width="0.75"/></svg>
<div class="r" style="left:375px;top:238.5px;width:11.1px;height:10.4px;border:1px solid #3a3a3a;border-radius:1px"></div><svg style="left:380.55px;top:243.7px" width="1" height="1"><path d="M-1.7 0.8 L0 -0.8 L1.7 0.8" fill="none" stroke="#b8b8b8" stroke-width="0.75"/></svg>
<div class="t" style="left:341.3px;top:259.65px;font-size:5.0px;color:#c4c4c4;font-weight:normal;font-family:'Liberation Sans', sans-serif;letter-spacing:-0.1px">Distance to empty</div>
<div class="t" style="left:341.5px;top:266.78px;font-size:9.4px;color:#d2d2d2;font-weight:normal;font-family:'Liberation Sans', sans-serif;transform:scaleX(0.9);transform-origin:0 0;">568<span style="font-size:7.6px;color:#777"> km</span></div>
<div class="t" style="left:408.5px;top:232.15px;font-size:5.0px;color:#c4c4c4;font-weight:normal;font-family:'Liberation Sans', sans-serif;letter-spacing:-0.1px">Anti-theft system</div>
<div class="btn" style="left:408.5px;top:238.8px;width:36.5px;height:11.1px;border-color:#b0b0b0;color:#e4e4e4;font-size:5.0px"><span>Trigger alarm</span></div>
<div class="t" style="left:475.7px;top:232.15px;font-size:5.0px;color:#c4c4c4;font-weight:normal;font-family:'Liberation Sans', sans-serif;letter-spacing:-0.15px">Indoor temperature</div>
<div class="t" style="left:475.9px;top:239.43px;font-size:9.0px;color:#d2d2d2;font-weight:normal;font-family:'Liberation Sans', sans-serif;transform:scaleX(0.9);transform-origin:0 0;">28°</div>
<div class="r" style="left:496.2px;top:238.5px;width:10.5px;height:10.4px;border:1px solid #3a3a3a;border-radius:1px"></div><svg style="left:501.45px;top:243.7px" width="1" height="1"><path d="M-1.7 -0.8 L0 0.8 L1.7 -0.8" fill="none" stroke="#b8b8b8" stroke-width="0.75"/></svg>
<div class="r" style="left:509.6px;top:238.5px;width:10.4px;height:10.4px;border:1px solid #3a3a3a;border-radius:1px"></div><svg style="left:514.8000000000001px;top:243.7px" width="1" height="1"><path d="M-1.7 0.8 L0 -0.8 L1.7 0.8" fill="none" stroke="#b8b8b8" stroke-width="0.75"/></svg>
<div class="t" style="left:475.7px;top:259.65px;font-size:5.0px;color:#c4c4c4;font-weight:normal;font-family:'Liberation Sans', sans-serif;letter-spacing:-0.15px">Outdoor temperature</div>
<div class="t" style="left:475.9px;top:266.83px;font-size:9.0px;color:#d2d2d2;font-weight:normal;font-family:'Liberation Sans', sans-serif;transform:scaleX(0.9);transform-origin:0 0;">32°</div>
<div class="r" style="left:496.2px;top:266.3px;width:10.5px;height:10.4px;border:1px solid #3a3a3a;border-radius:1px"></div><svg style="left:501.45px;top:271.5px" width="1" height="1"><path d="M-1.7 -0.8 L0 0.8 L1.7 -0.8" fill="none" stroke="#b8b8b8" stroke-width="0.75"/></svg>
<div class="r" style="left:509.6px;top:266.3px;width:10.4px;height:10.4px;border:1px solid #3a3a3a;border-radius:1px"></div><svg style="left:514.8000000000001px;top:271.5px" width="1" height="1"><path d="M-1.7 0.8 L0 -0.8 L1.7 0.8" fill="none" stroke="#b8b8b8" stroke-width="0.75"/></svg>
</div>
<div class="p" style="left:558px">
<div class="r" style="left:0px;top:0px;width:538px;height:18px;background:#0d0d0d"></div>
<svg style="left:6px;top:4.5px" width="6" height="9" viewBox="0 0 6 9"><path d="M0.3 2.2 L5.7 0.2 L5.7 1.6 L0.3 3.6Z M0.3 4.6 L5.7 2.6 L5.7 4.0 L0.3 6.0Z M0.3 7.0 L5.7 5.0 L5.7 6.4 L0.3 8.4Z" fill="#e6e6e6"/></svg>
<div class="t" style="left:15.6px;top:7.5px;font-size:4.85px;color:#c8c8c8;font-weight:normal;font-family:'Liberation Sans', sans-serif;">Ericsson CV Demo</div>
<svg style="left:494.8px;top:6.2px" width="7" height="7" viewBox="0 0 7 7"><circle cx="3.5" cy="3.5" r="3" fill="none" stroke="#9a9a9a" stroke-width="0.65"/><circle cx="3.5" cy="2.7" r="0.9" fill="none" stroke="#9a9a9a" stroke-width="0.55"/><path d="M2 5.3 Q3.5 3.9 5 5.3" fill="none" stroke="#9a9a9a" stroke-width="0.55"/></svg>
<div class="t" style="left:504px;top:7.8px;font-size:4.9px;color:#9a9a9a;font-weight:normal;font-family:'Liberation Sans', sans-serif;">Jimmy Jiang</div>
<div class="t" style="left:6px;top:23.9px;font-size:6.7px;color:#e4e4e4;font-weight:normal;font-family:'Liberation Sans', sans-serif;-webkit-text-stroke:0.25px #e4e4e4">Vehicle simulator</div>
<div class="r" style="left:457px;top:21.2px;width:75px;height:11.2px;background:#101010;border:1px solid #8c8c8c"></div>
<div class="t" style="left:461.3px;top:24.6px;font-size:4.5px;color:#e6e6e6;font-weight:normal;font-family:'Liberation Sans', sans-serif;-webkit-text-stroke:0.12px #e6e6e6;letter-spacing:-0.02px">FERRARI 488 GTB ST4723</div>
<svg style="left:521px;top:25.2px" width="5" height="3" viewBox="0 0 5 3"><path d="M1.1 0.8 L2.5 2 L3.9 0.8" fill="none" stroke="#bbb" stroke-width="0.6"/></svg>
<div class="r" style="left:6px;top:36px;width:526px;height:250.3px;background:#242424"></div>
<div class="t" style="left:16px;top:45.6px;font-size:5.1px;color:#6e6e6e;font-weight:normal;font-family:'Liberation Sans', sans-serif;">Head unit</div>
<div class="t" style="left:48.4px;top:45.6px;font-size:5.1px;color:#6e6e6e;font-weight:normal;font-family:'Liberation Sans', sans-serif;">Vehicle</div>
<div class="t" style="left:81px;top:45.6px;font-size:5.1px;color:#f0f0f0;font-weight:normal;font-family:'Liberation Sans', sans-serif;-webkit-text-stroke:0.12px #f0f0f0">Trips</div>
<div class="r" style="left:71.5px;top:52.3px;width:30px;height:1.1px;background:#37689e"></div>
<div class="r" style="left:6px;top:288px;width:526px;height:90px;background:#222"></div>
<div class="t" style="left:11.9px;top:297.8px;font-size:5.8px;color:#dcdcdc;font-weight:normal;font-family:'Liberation Sans', sans-serif;-webkit-text-stroke:0.15px #dcdcdc">Message exchange with cloud</div>
<svg style="left:507.5px;top:296.8px" width="6" height="7" viewBox="0 0 6 7"><path d="M0.6 1.2 H5.4 M2.2 1.2 V0.5 H3.8 V1.2 M1.1 1.6 H4.9 L4.6 6.6 H1.4Z" fill="#9a9a9a" stroke="#9a9a9a" stroke-width="0.5"/></svg>
<svg style="left:520px;top:297px" width="6" height="7" viewBox="0 0 6 7"><path d="M0.4 2 V0.4 H2 M4 0.4 H5.6 V2 M5.6 5 V6.6 H4 M2 6.6 H0.4 V5" fill="none" stroke="#9a9a9a" stroke-width="0.7"/></svg>
<div class="r" style="left:12.3px;top:312.4px;width:513.3px;height:59.6px;background:#161616;overflow:hidden"></div>
<div class="r" style="left:12.3px;top:312.4px;width:513.3px;height:2.2px;background:#1c1c1c"></div>
<div class="log" style="left:15.7px;top:316.30px;width:506px;overflow:hidden"><span class="g">[2019-06-21 10:17:52]:</span> <span class="pu">{</span><span class="k">"header"</span><span class="pu">:</span> <span class="pu">{</span><span class="k">"requestid"</span><span class="pu">:</span> "ZZTEST2WF20190619_1560909694377",<span class="k">"ackRequired"</span><span class="pu">:</span> <span class="b">false</span>,<span class="k">"imei"</span><span class="pu">:</span> 353386064467554,<span class="k">"imsi"</span><span class="pu">:</span> 111111,<span class="k">"vin"</span><span class="pu">:</span> "ZZTEST2WF2019061…</div>
<div class="log" style="left:15.7px;top:328.95px;width:506px;overflow:hidden"><span class="g">[2019-06-21 10:17:50]:</span> <span class="pu">{</span><span class="k">"header"</span><span class="pu">:</span> <span class="pu">{</span><span class="k">"requestid"</span><span class="pu">:</span> "ZZTEST2WF20190619_1560909694377",<span class="k">"ackRequired"</span><span class="pu">:</span> <span class="b">false</span>,<span class="k">"imei"</span><span class="pu">:</span> 353386064467554,<span class="k">"imsi"</span><span class="pu">:</span> 111111,<span class="k">"vin"</span><span class="pu">:</span> "ZZTEST2WF2019061…</div>
<div class="log" style="left:15.7px;top:341.60px;width:506px;overflow:hidden"><span class="g">[2019-06-21 10:17:47]:</span> <span class="pu">{</span><span class="k">"header"</span><span class="pu">:</span> <span class="pu">{</span><span class="k">"requestid"</span><span class="pu">:</span> "ZZTEST2WF20190619_1560909694377",<span class="k">"ackRequired"</span><span class="pu">:</span> <span class="b">false</span>,<span class="k">"imei"</span><span class="pu">:</span> 353386064467554,<span class="k">"imsi"</span><span class="pu">:</span> 111111,<span class="k">"vin"</span><span class="pu">:</span> "ZZTEST2WF2019061…</div>
<div class="log" style="left:15.7px;top:354.25px;width:506px;overflow:hidden"><span class="g">[2019-06-21 10:17:42]:</span> <span class="pu">{</span><span class="k">"header"</span><span class="pu">:</span> <span class="pu">{</span><span class="k">"requestid"</span><span class="pu">:</span> "ZZTEST2WF20190619_1560909694377",<span class="k">"ackRequired"</span><span class="pu">:</span> <span class="b">false</span>,<span class="k">"imei"</span><span class="pu">:</span> 353386064467554,<span class="k">"imsi"</span><span class="pu">:</span> 111111,<span class="k">"vin"</span><span class="pu">:</span> "ZZTEST2WF2019061…</div>
<div class="log" style="left:15.7px;top:366.90px;width:506px;overflow:hidden"><span class="g">[2019-06-21 10:17:34]:</span> <span class="pu">{</span><span class="k">"header"</span><span class="pu">:</span> <span class="pu">{</span><span class="k">"requestid"</span><span class="pu">:</span> "ZZTEST2WF20190619_1560909694377",<span class="k">"ackRequired"</span><span class="pu">:</span> <span class="b">false</span>,<span class="k">"imei"</span><span class="pu">:</span> 353386064467554,<span class="k">"imsi"</span><span class="pu">:</span> 111111,<span class="k">"vin"</span><span class="pu">:</span> "ZZTEST2WF2019061…</div>
<div class="r" style="left:12.3px;top:369.5px;width:513.3px;height:2.5px;background:#161616"></div>
<div class="r" style="left:6px;top:372px;width:526px;height:6px;background:#222"></div>
<svg style="left:11.9px;top:59.3px;overflow:hidden" width="336" height="221.6" viewBox="0 0 336 221.6"><defs><pattern id="m2g2a" patternUnits="userSpaceOnUse" width="8.5" height="8.5" patternTransform="rotate(-24)"><path d="M0 0 H8.5 M0 0 V8.5" stroke="#fafafa" stroke-width="0.8" fill="none"/></pattern><pattern id="m2g2b" patternUnits="userSpaceOnUse" width="9" height="9" patternTransform="rotate(24)"><path d="M0 0 H9 M0 0 V9" stroke="#fafafa" stroke-width="0.8" fill="none"/></pattern><pattern id="m2g2c" patternUnits="userSpaceOnUse" width="10" height="10" patternTransform="rotate(10)"><path d="M0 0 H10 M0 0 V10" stroke="#fafafa" stroke-width="0.8" fill="none"/></pattern><pattern id="m2g2d" patternUnits="userSpaceOnUse" width="10" height="10" patternTransform="rotate(-13)"><path d="M0 0 H10 M0 0 V10" stroke="#fafafa" stroke-width="0.8" fill="none"/></pattern><clipPath id="m2c2a"><polygon points="0,0 215,0 190,88 150,115 100,128 0,120"/></clipPath><clipPath id="m2c2b"><polygon points="205,0 337,0 337,26 298,33 288,90 190,88"/></clipPath><clipPath id="m2c2d"><polygon points="0,180 337,160 337,222 0,222"/></clipPath></defs><rect width="336" height="221.6" fill="#e8e8e8"/><rect x="147.3" y="18.8" width="17.30" height="50.30" fill="#f4eddb" rx="3" opacity="0.6"/><rect x="168.1" y="43.1" width="34.70" height="26.00" fill="#f4eddb" rx="3" opacity="0.6"/><rect x="110" y="67.7" width="47.70" height="34.70" fill="#f4eddb" rx="3" opacity="0.6"/><rect x="104" y="34.7" width="8.00" height="15.60" fill="#f4eddb" rx="3" opacity="0.6"/><rect x="1.7" y="10.4" width="17.30" height="24.30" fill="#f4eddb" rx="3" opacity="0.6"/><rect x="94" y="194" width="17.00" height="23.70" fill="#f4eddb" rx="3" opacity="0.6"/><rect x="109" y="189.6" width="43.00" height="32.40" fill="#f4eddb" rx="3" opacity="0.6"/><rect x="160.9" y="196.1" width="21.60" height="15.10" fill="#f4eddb" rx="3" opacity="0.6"/><rect x="40" y="205" width="40.00" height="17.00" fill="#f4eddb" rx="3" opacity="0.6"/><rect x="57.3" y="31.2" width="19.10" height="19.10" fill="#efdcdc" rx="2"/><rect x="82.4" y="67.7" width="28.60" height="41.70" fill="#dedede" /><rect x="152.3" y="178.9" width="12.90" height="43.10" fill="#dcdcdc" /><rect width="336" height="221.6" fill="url(#m2g2a)" clip-path="url(#m2c2a)"/><rect width="336" height="221.6" fill="url(#m2g2b)" clip-path="url(#m2c2b)"/><rect width="336" height="221.6" fill="url(#m2g2d)" clip-path="url(#m2c2d)"/><polygon points="34.7,24.3 59.9,13.9 64.2,20.8 41.7,37.3 35.6,30.4" fill="#c3e6ad" /><circle cx="98" cy="9.5" r="8" fill="#c3e6ad"/><rect x="102.4" y="17.4" width="4.40" height="6.90" fill="#c3e6ad" /><rect x="92" y="34.7" width="10.40" height="7.80" fill="#c3e6ad" /><rect x="93.8" y="59.9" width="6.90" height="6.90" fill="#c3e6ad" rx="2"/><polygon points="161.2,12.7 185.5,19.7 176.8,46.6 161.2,40.5" fill="#c3e6ad" /><ellipse cx="138.2" cy="32.6" rx="4.8" ry="7" fill="#c3e6ad"/><rect x="116" y="35.3" width="7.90" height="9.50" fill="#c3e6ad" /><rect x="187" y="1.4" width="5.40" height="5.20" fill="#c3e6ad" /><polygon points="299,32.7 312.9,27.5 337,25.8 337,70 323.4,70 313,57 300.8,44.9" fill="#c3e6ad" /><polygon points="274.7,37.1 285.1,41.4 280.8,53.6 264.3,47.5" fill="#c3e6ad" /><polygon points="259,0 266,0 256.5,18 253,17.1" fill="#c3e6ad" /><rect x="318.2" y="0" width="6.90" height="5.00" fill="#c3e6ad" rx="2"/><rect x="9.5" y="76.4" width="15.60" height="17.30" fill="#c3e6ad" rx="1"/><rect x="2.6" y="100.7" width="12.10" height="12.10" fill="#c3e6ad" /><rect x="39" y="90.3" width="8.70" height="12.10" fill="#c3e6ad" /><rect x="65.1" y="109.4" width="10.40" height="8.70" fill="#c3e6ad" /><rect x="39" y="67.7" width="7.00" height="5.20" fill="#c3e6ad" /><rect x="91.1" y="126.7" width="12.20" height="3.50" fill="#c3e6ad" /><rect x="161.2" y="83.3" width="12.20" height="23.50" fill="#c3e6ad" /><rect x="175.1" y="81.6" width="15.60" height="6.90" fill="#c3e6ad" rx="2"/><rect x="320" y="67.7" width="17.00" height="8.70" fill="#c3e6ad" /><rect x="13.1" y="200.4" width="24.90" height="14.10" fill="#c3e6ad" /><rect x="128.5" y="194" width="4.30" height="10.80" fill="#c3e6ad" /><rect x="141.5" y="191.8" width="10.80" height="6.50" fill="#c3e6ad" /><rect x="188.9" y="204.8" width="13.00" height="12.90" fill="#c3e6ad" /><polyline points="0,2 112,1.5" fill="none" stroke="#ffffff" stroke-width="1.7" stroke-linejoin="round" stroke-linecap="round" /><polyline points="22.6,1.7 30,25 43.4,43.4 69.4,55.6 90.3,57.3 120,60" fill="none" stroke="#ffffff" stroke-width="1.7" stroke-linejoin="round" stroke-linecap="round" /><polyline points="26,5.2 15.6,52 10.4,70" fill="none" stroke="#ffffff" stroke-width="1.7" stroke-linejoin="round" stroke-linecap="round" /><polyline points="62.5,11.3 76.4,40 83.3,53.8 98,64" fill="none" stroke="#ffffff" stroke-width="1.7" stroke-linejoin="round" stroke-linecap="round" /><polyline points="133.4,1.4 155,35 178.5,69.1 190,88" fill="none" stroke="#ffffff" stroke-width="1.7" stroke-linejoin="round" stroke-linecap="round" /><polyline points="154.2,1.4 166.4,10.1 220.2,32.7 295.6,39.7" fill="none" stroke="#ffffff" stroke-width="1.7" stroke-linejoin="round" stroke-linecap="round" /><polyline points="219.1,4.9 243.4,20 295.6,39.7 337,25" fill="none" stroke="#ffffff" stroke-width="1.7" stroke-linejoin="round" stroke-linecap="round" /><polyline points="243.4,41.4 253.9,69.7 260,90" fill="none" stroke="#ffffff" stroke-width="1.7" stroke-linejoin="round" stroke-linecap="round" /><polyline points="295.6,39.7 285.1,69.7 280,92" fill="none" stroke="#ffffff" stroke-width="1.7" stroke-linejoin="round" stroke-linecap="round" /><polyline points="0,97 40,104 80,108 111,106" fill="none" stroke="#ffffff" stroke-width="1.7" stroke-linejoin="round" stroke-linecap="round" /><polyline points="7,67.7 60,78 111,88" fill="none" stroke="#ffffff" stroke-width="1.7" stroke-linejoin="round" stroke-linecap="round" /><polyline points="0,121.5 39,131 73.8,130 103.3,127.5" fill="none" stroke="#ffffff" stroke-width="1.7" stroke-linejoin="round" stroke-linecap="round" /><polyline points="120,60 160,72 200,88" fill="none" stroke="#ffffff" stroke-width="1.7" stroke-linejoin="round" stroke-linecap="round" /><polyline points="110,88 150,85 187,86.8" fill="none" stroke="#ffffff" stroke-width="1.7" stroke-linejoin="round" stroke-linecap="round" /><polyline points="109,112 140,114 165,112" fill="none" stroke="#ffffff" stroke-width="1.7" stroke-linejoin="round" stroke-linecap="round" /><polyline points="219.1,91.5 267.8,91" fill="none" stroke="#ffffff" stroke-width="1.7" stroke-linejoin="round" stroke-linecap="round" /><polyline points="250.4,67.7 257.3,90.3 269.5,125.1 271.2,137.7 280,160" fill="none" stroke="#ffffff" stroke-width="1.7" stroke-linejoin="round" stroke-linecap="round" /><polyline points="269.5,125 300,135 337,128" fill="none" stroke="#ffffff" stroke-width="1.7" stroke-linejoin="round" stroke-linecap="round" /><polyline points="2.3,186 55.2,178.5 111.1,175.2 152,176" fill="none" stroke="#ffffff" stroke-width="1.7" stroke-linejoin="round" stroke-linecap="round" /><polyline points="20.7,219.9 111.1,198.3 165,185" fill="none" stroke="#ffffff" stroke-width="1.7" stroke-linejoin="round" stroke-linecap="round" /><polyline points="165.2,185 200,192 230,210 337,218" fill="none" stroke="#ffffff" stroke-width="1.7" stroke-linejoin="round" stroke-linecap="round" /><polyline points="172,178 172,222" fill="none" stroke="#ffffff" stroke-width="1.7" stroke-linejoin="round" stroke-linecap="round" /><polyline points="200,195 196,222" fill="none" stroke="#ffffff" stroke-width="1.7" stroke-linejoin="round" stroke-linecap="round" /><polyline points="110,67.7 125,100 131.7,118" fill="none" stroke="#ffffff" stroke-width="1.7" stroke-linejoin="round" stroke-linecap="round" /><polyline points="143.8,120 155,140 172,168" fill="none" stroke="#ffffff" stroke-width="1.7" stroke-linejoin="round" stroke-linecap="round" /><polygon points="0,121.5 20,127 39,132 73.8,131.1 91.1,126.7 103.3,128.5 111.1,119.8 119.5,123.3 131.7,119.8 143.8,118.1 161.2,112.8 173.4,109.4 187.2,119.8 202.9,126.7 199.4,111.1 190.7,93.7 187.2,86.8 221.1,92.9 267.8,92.5 280,93.5 288.6,90.3 306,85.1 323.4,81.6 337,81.6 337,104.2 323.4,105.9 306,107.7 288.6,109.4 271.2,100.7 253.9,97.2 234.7,102.5 236.5,111.1 248,125 257.9,135.7 262.2,163.7 294.6,168 314,165.9 337,163.7 337,222 266.6,222 264.4,211.2 247.1,204.7 219.1,198.3 195.4,187.5 171.7,178.9 152.3,176.7 109.1,175.6 55.2,178.9 2.3,186.4 0,186.4" fill="#aad3fb" /><polyline points="68.5,67.7 77.2,78.1 80.7,90.3 87.7,102.4 96.3,109.4 110.2,118.1" fill="none" stroke="#aad3fb" stroke-width="4.3" stroke-linejoin="round" stroke-linecap="round" /><polyline points="0.9,40 17.4,46.9 39.9,55.6 57.3,59.9 69.4,64.2 74.7,70" fill="none" stroke="#aad3fb" stroke-width="5" stroke-linejoin="round" stroke-linecap="round" /><polygon points="0,161.6 20.7,162.7 31.5,172.4 25,182.1 7.7,185.3 0,186.4" fill="#e8e8e8" /><polygon points="124,140 130,132.5 138,133 142,142 141,155 133,162 126,155" fill="#e8e8e8" /><ellipse cx="157" cy="121.5" rx="7.8" ry="5.2" fill="#e8e8e8"/><rect x="152" y="119" width="8.00" height="5.00" fill="#c3e6ad" rx="2"/><polygon points="143.6,128 160,126.7 178,128 184.6,140 183,155 172,168 162,176 152,175 146,165 143.6,150" fill="#f4eddb" /><polygon points="206.3,119.8 215,118 224,125 238.5,145 236,153 222,150 210,135" fill="#e8e8e8" /><ellipse cx="240.1" cy="163.7" rx="7" ry="8.6" fill="#e8e8e8"/><polygon points="272,175 285,172.4 295.7,178 293,188.5 280,187 273,182" fill="#e8e8e8" /><rect x="236.5" y="102.5" width="17.40" height="5.20" fill="#c3e6ad" rx="2"/><rect x="297.3" y="125.1" width="12.20" height="8.60" fill="#c3e6ad" rx="2"/><polygon points="323.4,106 337,104.2 337,133.7 325,133.7" fill="#c3e6ad" /><rect x="268" y="80" width="20.00" height="12.00" fill="#c3e6ad" rx="3"/><polyline points="0.9,35.6 34.7,48.6 69.4,59 77.2,67.7 84.2,81.6 91.1,98.9 98.1,107.6 109.1,111.1 119.5,114.6 124.7,125 135,135.7 147.9,157.3 154.4,178.9 163,175.6 173.8,181 221.1,202.6 260,214 266,222" fill="none" stroke="#f6d77e" stroke-width="1.9" stroke-linejoin="round" stroke-linecap="round" /><path d="M46.6 135.7 L111.1 163.8" stroke="#7aa6d6" stroke-width="0.4" fill="none"/><path d="M264 211 L337 195" stroke="#5a8fd0" stroke-width="0.6" stroke-dasharray="1 1" fill="none"/><text x="101.5" y="68" font-family="Liberation Sans" font-size="6.0" fill="#5b6170" font-weight="bold" letter-spacing="0.75" text-anchor="start">NORRMALM</text><text x="21.7" y="96.4" font-family="Liberation Sans" font-size="4.5" fill="#5b6170" font-weight="bold" letter-spacing="0.45" text-anchor="start">KUNGSHOLMEN</text><text x="202.9" y="51.4" font-family="Liberation Sans" font-size="6.0" fill="#5b6170" font-weight="bold" letter-spacing="0.75" text-anchor="start">ÖSTERMALM</text><text x="131.7" y="112.5" font-family="Liberation Sans" font-size="8.2" fill="#7b7b7b" font-weight="normal" letter-spacing="0.55" text-anchor="start">Stockholm</text><text x="150.1" y="140.8" font-family="Liberation Sans" font-size="4.8" fill="#5b6170" font-weight="bold" letter-spacing="0.75" text-anchor="start">GAMLA STAN</text><text x="166.4" y="29.5" font-family="Liberation Sans" font-size="4.6" fill="#3a8a45" font-weight="normal" letter-spacing="0" text-anchor="start">Park</text><text x="158.6" y="34.2" font-family="Liberation Sans" font-size="3.6" fill="#3a8a45" font-weight="normal" letter-spacing="0" text-anchor="start">Humlegården</text><text x="182.9" y="88.4" font-family="Liberation Sans" font-size="4.2" fill="#3a8a45" font-weight="normal" letter-spacing="0" text-anchor="start">Park</text><text x="171.6" y="93.6" font-family="Liberation Sans" font-size="3.3" fill="#3a8a45" font-weight="normal" letter-spacing="0" text-anchor="start">Kungsträdgården</text><text x="56.4" y="118.8" font-family="Liberation Sans" font-size="4.6" fill="#555" font-weight="normal" letter-spacing="0" text-anchor="start">City or town hall</text><text x="51.2" y="123.6" font-family="Liberation Sans" font-size="3.4" fill="#666" font-weight="normal" letter-spacing="0" text-anchor="start">Stockholms stadshus</text><text x="179.4" y="131.8" font-family="Liberation Sans" font-size="4.3" fill="#2a8d8d" font-weight="normal" letter-spacing="0" text-anchor="start">Moderna Museet</text><text x="253.9" y="116.2" font-family="Liberation Sans" font-size="4.3" fill="#2a8d8d" font-weight="normal" letter-spacing="0" text-anchor="start">Vasamuseet</text><text x="276.5" y="124.6" font-family="Liberation Sans" font-size="4.3" fill="#2a8d8d" font-weight="normal" letter-spacing="0" text-anchor="start">Skansen</text><text x="274.1" y="152.4" font-family="Liberation Sans" font-size="4.3" fill="#2a8d8d" font-weight="normal" letter-spacing="0" text-anchor="start">Amusement park</text><text x="274" y="156.8" font-family="Liberation Sans" font-size="3.3" fill="#2a8d8d" font-weight="normal" letter-spacing="0" text-anchor="start">Gröna Lund</text><text x="307.5" y="178.8" font-family="Liberation Sans" font-size="4.3" fill="#2a8d8d" font-weight="normal" letter-spacing="0" text-anchor="start">Prins Eugens</text><text x="300" y="184.8" font-family="Liberation Sans" font-size="4.3" fill="#2a8d8d" font-weight="normal" letter-spacing="0" text-anchor="start">Waldemarsudde</text><text x="194.3" y="198.8" font-family="Liberation Sans" font-size="4.3" fill="#2a8d8d" font-weight="normal" letter-spacing="0" text-anchor="start">Fotografiska</text><text x="320.8" y="80.5" font-family="Liberation Sans" font-size="4" fill="#2a8d8d" font-weight="normal" letter-spacing="0" text-anchor="start">Tekniska</text><text x="326.9" y="135.3" font-family="Liberation Sans" font-size="4" fill="#555" font-weight="normal" letter-spacing="0" text-anchor="start">Djur</text><path d="M96.3 120.69999999999999 L94.7 118.5 A2 2 0 1 1 97.89999999999999 118.5 Z" fill="#2aa7b5"/><circle cx="96.3" cy="117.5" r="0.7" fill="#fff"/><path d="M220.2 131.9 L218.6 129.70000000000002 A2 2 0 1 1 221.79999999999998 129.70000000000002 Z" fill="#2aa7b5"/><circle cx="220.2" cy="128.70000000000002" r="0.7" fill="#fff"/><path d="M248.6 116.39999999999999 L247.0 114.2 A2 2 0 1 1 250.2 114.2 Z" fill="#2aa7b5"/><circle cx="248.6" cy="113.2" r="0.7" fill="#fff"/><path d="M299.9 124.19999999999999 L298.29999999999995 122.0 A2 2 0 1 1 301.5 122.0 Z" fill="#2aa7b5"/><circle cx="299.9" cy="121.0" r="0.7" fill="#fff"/><path d="M269.8 153.79999999999998 L268.2 151.6 A2 2 0 1 1 271.40000000000003 151.6 Z" fill="#2aa7b5"/><circle cx="269.8" cy="150.6" r="0.7" fill="#fff"/><path d="M226.6 198.7 L225.0 196.5 A2 2 0 1 1 228.2 196.5 Z" fill="#2aa7b5"/><circle cx="226.6" cy="195.5" r="0.7" fill="#fff"/><path d="M168 92.6 L166.4 90.4 A2 2 0 1 1 169.6 90.4 Z" fill="#2aa7b5"/><circle cx="168" cy="89.4" r="0.7" fill="#fff"/><rect x="109" y="100" width="3.50" height="4.50" fill="#4aa3e8" rx="0.5"/><rect x="75" y="0" width="4.00" height="2.50" fill="#4aa3e8" /><rect x="200" y="191" width="5.00" height="3.00" fill="#3f6fc0" /><g transform="translate(143.8,81.6) rotate(-22) scale(1.0)"><rect x="-4.8" y="-8.3" width="9.6" height="16.6" rx="4.6" fill="#9fd0ff" opacity="0.85"/><rect x="-3.7" y="-7.2" width="7.4" height="14.4" rx="3.6" fill="#1f6fd2"/><ellipse cx="0" cy="-4.4" rx="2" ry="1.3" fill="#e6f4ff"/><ellipse cx="0" cy="-1.2" rx="2" ry="1.1" fill="#e6f4ff"/><ellipse cx="0" cy="1.8" rx="2.2" ry="1.6" fill="#bfe4ff"/><ellipse cx="0" cy="5" rx="1.8" ry="1" fill="#e6f4ff"/></g><circle cx="9.5" cy="212.3" r="6" fill="#fff"/><circle cx="9.5" cy="209.70000000000002" r="1.3" fill="#555"/><rect x="7.9" y="211.10000000000002" width="3.2" height="4.6" rx="1" fill="#555"/><rect x="322.6" y="198.3" width="10.8" height="20.5" rx="1" fill="#fff"/><path d="M326.0 203.835 h4 M328.0 201.835 v4 M326.0 213.26500000000001 h4" stroke="#666" stroke-width="0.8"/><path d="M324.6 208.55 h6.800000000000001" stroke="#e6e6e6" stroke-width="0.5"/></svg>
<div class="r" style="left:365.8px;top:60.6px;width:33.5px;height:11.5px;background:#e02a3c;border-radius:1px"></div>
<svg style="left:372px;top:63px" width="6" height="7" viewBox="0 0 6 7"><path d="M1.6 0.6 Q0.4 1.2 0.8 3.2 Q1.6 5.6 3.8 6.3 Q5 6.6 5.3 5.6 L4.4 4.6 L3.6 5 Q2.2 4 1.9 2.6 L2.6 2 Z" fill="#fff"/></svg>
<div class="t" style="left:380.2px;top:64.58px;font-size:4.8px;color:#f4f4f4;font-weight:normal;font-family:'Liberation Sans', sans-serif;transform:scaleX(0.92);transform-origin:0 0;">SOS</div>
<div class="r" style="left:461.7px;top:59.5px;width:61px;height:13.4px;background:#171717;border-radius:2px"></div>
<svg style="left:463px;top:60.2px" width="12" height="12" viewBox="0 0 12 12"><circle cx="6" cy="6" r="5.3" fill="none" stroke="#555" stroke-width="0.6"/><circle cx="6" cy="4.8" r="1.6" fill="none" stroke="#bbb" stroke-width="0.6"/><path d="M3.3 8.8 Q6 5.6 8.7 8.8" fill="none" stroke="#bbb" stroke-width="0.6"/></svg>
<div class="t" style="left:477.5px;top:64.36px;font-size:5.7px;color:#e4e4e4;font-weight:normal;font-family:'Liberation Sans', sans-serif;-webkit-text-stroke:0.1px #e4e4e4">Valet mode OFF</div>
<div class="t" style="left:364.9px;top:90.56px;font-size:8.8px;color:#e2e2e2;font-weight:normal;font-family:'Liberation Sans', sans-serif;">Driving</div>
<div class="r" style="left:476px;top:90.2px;width:46.7px;height:10.4px;border:1px solid #9a9a9a"></div>
<div class="t" style="left:481.6px;top:92.57px;font-size:5.6px;color:#e0e0e0;font-weight:normal;font-family:'Liberation Sans', sans-serif;transform:scaleX(0.8);transform-origin:0 0;">Demo Route 1</div>
<svg style="left:511.5px;top:94px" width="5" height="3" viewBox="0 0 5 3"><path d="M1.1 0.8 L2.5 2 L3.9 0.8" fill="none" stroke="#ccc" stroke-width="0.6"/></svg>
<svg style="left:0;top:0" width="538" height="300"><rect x="-1.19" y="-0.90" width="2.38" height="1.80" fill="#f4f4f4" transform="translate(377.19 174.81) rotate(135.0)"/><rect x="-1.19" y="-0.90" width="2.38" height="1.80" fill="#f4f4f4" transform="translate(374.27 171.51) rotate(141.9)"/><rect x="-1.19" y="-0.90" width="2.38" height="1.80" fill="#f4f4f4" transform="translate(371.76 167.88) rotate(148.8)"/><rect x="-1.19" y="-0.90" width="2.38" height="1.80" fill="#f4f4f4" transform="translate(369.72 163.98) rotate(155.8)"/><rect x="-1.19" y="-0.90" width="2.38" height="1.80" fill="#f4f4f4" transform="translate(368.15 159.86) rotate(162.7)"/><rect x="-1.04" y="-0.76" width="2.09" height="1.52" fill="#7a7a7a" transform="translate(367.10 155.58) rotate(169.6)"/><rect x="-1.04" y="-0.76" width="2.09" height="1.52" fill="#7a7a7a" transform="translate(366.57 151.20) rotate(176.5)"/><rect x="-1.04" y="-0.76" width="2.09" height="1.52" fill="#7a7a7a" transform="translate(366.57 146.80) rotate(183.5)"/><rect x="-1.04" y="-0.76" width="2.09" height="1.52" fill="#7a7a7a" transform="translate(367.10 142.42) rotate(190.4)"/><rect x="-1.04" y="-0.76" width="2.09" height="1.52" fill="#7a7a7a" transform="translate(368.15 138.14) rotate(197.3)"/><rect x="-1.04" y="-0.76" width="2.09" height="1.52" fill="#7a7a7a" transform="translate(369.72 134.02) rotate(204.2)"/><rect x="-1.04" y="-0.76" width="2.09" height="1.52" fill="#7a7a7a" transform="translate(371.76 130.12) rotate(211.2)"/><rect x="-1.04" y="-0.76" width="2.09" height="1.52" fill="#7a7a7a" transform="translate(374.27 126.49) rotate(218.1)"/><rect x="-1.04" y="-0.76" width="2.09" height="1.52" fill="#7a7a7a" transform="translate(377.19 123.19) rotate(225.0)"/><rect x="-1.04" y="-0.76" width="2.09" height="1.52" fill="#7a7a7a" transform="translate(380.49 120.27) rotate(231.9)"/><rect x="-1.04" y="-0.76" width="2.09" height="1.52" fill="#7a7a7a" transform="translate(384.12 117.76) rotate(238.8)"/><rect x="-1.04" y="-0.76" width="2.09" height="1.52" fill="#7a7a7a" transform="translate(388.02 115.72) rotate(245.8)"/><rect x="-1.04" y="-0.76" width="2.09" height="1.52" fill="#7a7a7a" transform="translate(392.14 114.15) rotate(252.7)"/><rect x="-1.04" y="-0.76" width="2.09" height="1.52" fill="#7a7a7a" transform="translate(396.42 113.10) rotate(259.6)"/><rect x="-1.04" y="-0.76" width="2.09" height="1.52" fill="#7a7a7a" transform="translate(400.80 112.57) rotate(266.5)"/><rect x="-1.04" y="-0.76" width="2.09" height="1.52" fill="#7a7a7a" transform="translate(405.20 112.57) rotate(273.5)"/><rect x="-1.04" y="-0.76" width="2.09" height="1.52" fill="#7a7a7a" transform="translate(409.58 113.10) rotate(280.4)"/><rect x="-1.04" y="-0.76" width="2.09" height="1.52" fill="#7a7a7a" transform="translate(413.86 114.15) rotate(287.3)"/><rect x="-1.04" y="-0.76" width="2.09" height="1.52" fill="#7a7a7a" transform="translate(417.98 115.72) rotate(294.2)"/><rect x="-1.04" y="-0.76" width="2.09" height="1.52" fill="#7a7a7a" transform="translate(421.88 117.76) rotate(301.2)"/><rect x="-1.04" y="-0.76" width="2.09" height="1.52" fill="#7a7a7a" transform="translate(425.51 120.27) rotate(308.1)"/><rect x="-1.04" y="-0.76" width="2.09" height="1.52" fill="#7a7a7a" transform="translate(428.81 123.19) rotate(315.0)"/><rect x="-1.04" y="-0.76" width="2.09" height="1.52" fill="#7a7a7a" transform="translate(431.73 126.49) rotate(321.9)"/><rect x="-1.04" y="-0.76" width="2.09" height="1.52" fill="#7a7a7a" transform="translate(434.24 130.12) rotate(328.8)"/><rect x="-1.04" y="-0.76" width="2.09" height="1.52" fill="#7a7a7a" transform="translate(436.28 134.02) rotate(335.8)"/><rect x="-1.04" y="-0.76" width="2.09" height="1.52" fill="#7a7a7a" transform="translate(437.85 138.14) rotate(342.7)"/><rect x="-1.04" y="-0.76" width="2.09" height="1.52" fill="#7a7a7a" transform="translate(438.90 142.42) rotate(349.6)"/><rect x="-1.04" y="-0.76" width="2.09" height="1.52" fill="#7a7a7a" transform="translate(439.43 146.80) rotate(356.5)"/><rect x="-1.04" y="-0.76" width="2.09" height="1.52" fill="#7a7a7a" transform="translate(439.43 151.20) rotate(363.5)"/><rect x="-1.04" y="-0.76" width="2.09" height="1.52" fill="#7a7a7a" transform="translate(438.90 155.58) rotate(370.4)"/><rect x="-1.04" y="-0.76" width="2.09" height="1.52" fill="#7a7a7a" transform="translate(437.85 159.86) rotate(377.3)"/><rect x="-1.04" y="-0.76" width="2.09" height="1.52" fill="#7a7a7a" transform="translate(436.28 163.98) rotate(384.2)"/><rect x="-1.04" y="-0.76" width="2.09" height="1.52" fill="#7a7a7a" transform="translate(434.24 167.88) rotate(391.2)"/><rect x="-1.04" y="-0.76" width="2.09" height="1.52" fill="#7a7a7a" transform="translate(431.73 171.51) rotate(398.1)"/><rect x="-1.04" y="-0.76" width="2.09" height="1.52" fill="#7a7a7a" transform="translate(428.81 174.81) rotate(405.0)"/><rect x="-1.00" y="-0.76" width="2.00" height="1.52" fill="#f4f4f4" transform="translate(465.50 176.40) rotate(135.0)"/><rect x="-1.00" y="-0.76" width="2.00" height="1.52" fill="#f4f4f4" transform="translate(463.15 173.72) rotate(142.3)"/><rect x="-1.00" y="-0.76" width="2.00" height="1.52" fill="#f4f4f4" transform="translate(461.15 170.77) rotate(149.6)"/><rect x="-1.00" y="-0.76" width="2.00" height="1.52" fill="#f4f4f4" transform="translate(459.55 167.59) rotate(156.9)"/><rect x="-1.00" y="-0.76" width="2.00" height="1.52" fill="#f4f4f4" transform="translate(458.36 164.23) rotate(164.2)"/><rect x="-1.00" y="-0.76" width="2.00" height="1.52" fill="#f4f4f4" transform="translate(457.61 160.75) rotate(171.5)"/><rect x="-1.00" y="-0.76" width="2.00" height="1.52" fill="#f4f4f4" transform="translate(457.31 157.19) rotate(178.8)"/><rect x="-1.00" y="-0.76" width="2.00" height="1.52" fill="#f4f4f4" transform="translate(457.46 153.63) rotate(186.1)"/><rect x="-1.00" y="-0.76" width="2.00" height="1.52" fill="#f4f4f4" transform="translate(458.06 150.12) rotate(193.4)"/><rect x="-1.00" y="-0.76" width="2.00" height="1.52" fill="#f4f4f4" transform="translate(459.10 146.71) rotate(200.7)"/><rect x="-1.00" y="-0.76" width="2.00" height="1.52" fill="#f4f4f4" transform="translate(460.57 143.47) rotate(208.0)"/><rect x="-1.00" y="-0.76" width="2.00" height="1.52" fill="#f4f4f4" transform="translate(462.44 140.43) rotate(215.3)"/><rect x="-0.88" y="-0.64" width="1.76" height="1.28" fill="#7a7a7a" transform="translate(464.68 137.66) rotate(222.6)"/><rect x="-0.88" y="-0.64" width="1.76" height="1.28" fill="#7a7a7a" transform="translate(467.25 135.19) rotate(229.9)"/><rect x="-0.88" y="-0.64" width="1.76" height="1.28" fill="#7a7a7a" transform="translate(470.12 133.07) rotate(237.2)"/><rect x="-0.88" y="-0.64" width="1.76" height="1.28" fill="#7a7a7a" transform="translate(473.23 131.34) rotate(244.5)"/><rect x="-0.88" y="-0.64" width="1.76" height="1.28" fill="#7a7a7a" transform="translate(476.53 130.01) rotate(251.8)"/><rect x="-0.88" y="-0.64" width="1.76" height="1.28" fill="#7a7a7a" transform="translate(479.98 129.11) rotate(259.1)"/><rect x="-0.88" y="-0.64" width="1.76" height="1.28" fill="#7a7a7a" transform="translate(483.52 128.66) rotate(266.4)"/><rect x="-0.88" y="-0.64" width="1.76" height="1.28" fill="#7a7a7a" transform="translate(487.08 128.66) rotate(273.6)"/><rect x="-0.88" y="-0.64" width="1.76" height="1.28" fill="#7a7a7a" transform="translate(490.62 129.11) rotate(280.9)"/><rect x="-0.88" y="-0.64" width="1.76" height="1.28" fill="#7a7a7a" transform="translate(494.07 130.01) rotate(288.2)"/><rect x="-0.88" y="-0.64" width="1.76" height="1.28" fill="#7a7a7a" transform="translate(497.37 131.34) rotate(295.5)"/><rect x="-0.88" y="-0.64" width="1.76" height="1.28" fill="#7a7a7a" transform="translate(500.48 133.07) rotate(302.8)"/><rect x="-0.88" y="-0.64" width="1.76" height="1.28" fill="#7a7a7a" transform="translate(503.35 135.19) rotate(310.1)"/><rect x="-0.88" y="-0.64" width="1.76" height="1.28" fill="#7a7a7a" transform="translate(505.92 137.66) rotate(317.4)"/><rect x="-0.88" y="-0.64" width="1.76" height="1.28" fill="#7a7a7a" transform="translate(508.16 140.43) rotate(324.7)"/><rect x="-0.88" y="-0.64" width="1.76" height="1.28" fill="#7a7a7a" transform="translate(510.03 143.47) rotate(332.0)"/><rect x="-0.88" y="-0.64" width="1.76" height="1.28" fill="#7a7a7a" transform="translate(511.50 146.71) rotate(339.3)"/><rect x="-0.88" y="-0.64" width="1.76" height="1.28" fill="#7a7a7a" transform="translate(512.54 150.12) rotate(346.6)"/><rect x="-0.88" y="-0.64" width="1.76" height="1.28" fill="#7a7a7a" transform="translate(513.14 153.63) rotate(353.9)"/><rect x="-0.88" y="-0.64" width="1.76" height="1.28" fill="#7a7a7a" transform="translate(513.29 157.19) rotate(361.2)"/><rect x="-0.88" y="-0.64" width="1.76" height="1.28" fill="#7a7a7a" transform="translate(512.99 160.75) rotate(368.5)"/><rect x="-0.88" y="-0.64" width="1.76" height="1.28" fill="#7a7a7a" transform="translate(512.24 164.23) rotate(375.8)"/><rect x="-0.88" y="-0.64" width="1.76" height="1.28" fill="#7a7a7a" transform="translate(511.05 167.59) rotate(383.1)"/><rect x="-0.88" y="-0.64" width="1.76" height="1.28" fill="#7a7a7a" transform="translate(509.45 170.77) rotate(390.4)"/><rect x="-0.88" y="-0.64" width="1.76" height="1.28" fill="#7a7a7a" transform="translate(507.45 173.72) rotate(397.7)"/><rect x="-0.88" y="-0.64" width="1.76" height="1.28" fill="#7a7a7a" transform="translate(505.10 176.40) rotate(405.0)"/><path d="M 510.24 151.30 A 25.5 25.5 0 0 1 504.25 173.66" fill="none" stroke="#a8283a" stroke-width="1"/></svg>
<div class="t" style="left:391.2px;top:130.51px;font-size:21.5px;color:#e6e6e6;font-weight:normal;font-family:'Liberation Sans', sans-serif;letter-spacing:-0.3px">48</div>
<div class="t" style="left:391px;top:158.00px;font-size:10px;color:#8a8a8a;font-weight:normal;font-family:'Liberation Sans', sans-serif;letter-spacing:0.2px">km/h</div>
<div class="t" style="left:378.4px;top:182.81px;font-size:8.4px;color:#9a9a9a;font-weight:normal;font-family:'Liberation Mono', monospace;">0</div>
<div class="t" style="left:411.6px;top:182.81px;font-size:8.4px;color:#9a9a9a;font-weight:normal;font-family:'Liberation Mono', monospace;letter-spacing:-0.05px">400</div>
<div class="t" style="left:480.8px;top:143.52px;font-size:16px;color:#e6e6e6;font-weight:normal;font-family:'Liberation Sans', sans-serif;">3</div>
<div class="t" style="left:479.2px;top:163.50px;font-size:5.4px;color:#7a7a7a;font-weight:normal;font-family:'Liberation Sans', sans-serif;">RPM</div>
<div class="t" style="left:480.6px;top:171.88px;font-size:3.2px;color:#7a7a7a;font-weight:normal;font-family:'Liberation Sans', sans-serif;">×1000</div>
<div class="t" style="left:466.8px;top:181.96px;font-size:7.2px;color:#9a9a9a;font-weight:normal;font-family:'Liberation Mono', monospace;">0</div>
<div class="t" style="left:493.8px;top:181.96px;font-size:7.2px;color:#9a9a9a;font-weight:normal;font-family:'Liberation Mono', monospace;letter-spacing:-0.2px">10</div>
<div class="t" style="left:372px;top:209.68px;font-size:4.8px;color:#c8c8c8;font-weight:normal;font-family:'Liberation Sans', sans-serif;letter-spacing:-0.12px">Distance</div>
<div class="t" style="left:372px;top:216.20px;font-size:9.2px;color:#e6e6e6;font-weight:normal;font-family:'Liberation Sans', sans-serif;transform:scaleX(0.88);transform-origin:0 0;">8.4<span style="font-size:7px;color:#7a7a7a"> km</span></div>
<div class="t" style="left:422.7px;top:209.68px;font-size:4.8px;color:#c8c8c8;font-weight:normal;font-family:'Liberation Sans', sans-serif;letter-spacing:-0.12px">Fuel level</div>
<div class="t" style="left:422.7px;top:216.20px;font-size:9.2px;color:#e6e6e6;font-weight:normal;font-family:'Liberation Sans', sans-serif;transform:scaleX(0.88);transform-origin:0 0;">74<span style="font-size:7px;color:#7a7a7a"> L</span></div>
<div class="t" style="left:468px;top:209.68px;font-size:4.8px;color:#c8c8c8;font-weight:normal;font-family:'Liberation Sans', sans-serif;letter-spacing:-0.12px">Distance to empty</div>
<div class="t" style="left:468px;top:216.20px;font-size:9.2px;color:#e6e6e6;font-weight:normal;font-family:'Liberation Sans', sans-serif;transform:scaleX(0.88);transform-origin:0 0;">559<span style="font-size:7px;color:#7a7a7a"> km</span></div>
<div class="t" style="left:365px;top:241.65px;font-size:5.0px;color:#d8d8d8;font-weight:normal;font-family:'Liberation Sans', sans-serif;letter-spacing:-0.1px">4:03</div>
<div class="t" style="left:502.8px;top:241.65px;font-size:5.0px;color:#6a6a6a;font-weight:normal;font-family:'Liberation Sans', sans-serif;letter-spacing:-0.1px">18:05</div>
<div class="r" style="left:382.6px;top:242.2px;width:112.4px;height:3.4px;background:#4a4a4a"></div>
<div class="r" style="left:382.6px;top:242.2px;width:45.3px;height:3.4px;background:#f4f4f4"></div>
<div class="btn" style="left:383px;top:261px;width:41.4px;height:10.8px;border-color:#4a4a4a;color:#555;font-size:4.8px"><span><svg style="position:static;margin-right:3px" width="4" height="5" viewBox="0 0 4 5"><path d="M0.5 0.5 L3.5 2.5 L0.5 4.5 Z" fill="none" stroke="#555" stroke-width="0.5"/></svg>Start trip</span></div>
<div class="btn" style="left:453.3px;top:261px;width:41.5px;height:10.8px;border-color:#a8a8a8;color:#e0e0e0;font-size:4.8px"><span><svg style="position:static;margin-right:3px" width="5" height="5" viewBox="0 0 5 5"><rect x="0.6" y="0.9" width="3.8" height="3.2" fill="none" stroke="#ddd" stroke-width="0.6"/></svg>End trip</span></div>
</div>
<div class="p" style="left:1106px">
<div class="r" style="left:0px;top:0px;width:538px;height:18px;background:#0d0d0d"></div>
<svg style="left:6px;top:4.5px" width="6" height="9" viewBox="0 0 6 9"><path d="M0.3 2.2 L5.7 0.2 L5.7 1.6 L0.3 3.6Z M0.3 4.6 L5.7 2.6 L5.7 4.0 L0.3 6.0Z M0.3 7.0 L5.7 5.0 L5.7 6.4 L0.3 8.4Z" fill="#e6e6e6"/></svg>
<div class="t" style="left:15.6px;top:7.5px;font-size:4.85px;color:#c8c8c8;font-weight:normal;font-family:'Liberation Sans', sans-serif;">Ericsson CV Demo</div>
<svg style="left:494.8px;top:6.2px" width="7" height="7" viewBox="0 0 7 7"><circle cx="3.5" cy="3.5" r="3" fill="none" stroke="#9a9a9a" stroke-width="0.65"/><circle cx="3.5" cy="2.7" r="0.9" fill="none" stroke="#9a9a9a" stroke-width="0.55"/><path d="M2 5.3 Q3.5 3.9 5 5.3" fill="none" stroke="#9a9a9a" stroke-width="0.55"/></svg>
<div class="t" style="left:504px;top:7.8px;font-size:4.9px;color:#9a9a9a;font-weight:normal;font-family:'Liberation Sans', sans-serif;">Jimmy Jiang</div>
<div class="t" style="left:6px;top:23.9px;font-size:6.7px;color:#e4e4e4;font-weight:normal;font-family:'Liberation Sans', sans-serif;-webkit-text-stroke:0.25px #e4e4e4">Vehicle simulator</div>
<div class="r" style="left:457px;top:21.2px;width:75px;height:11.2px;background:#101010;border:1px solid #8c8c8c"></div>
<div class="t" style="left:461.3px;top:24.6px;font-size:4.5px;color:#e6e6e6;font-weight:normal;font-family:'Liberation Sans', sans-serif;-webkit-text-stroke:0.12px #e6e6e6;letter-spacing:-0.02px">Vallonia 488 GTB ST4723</div>
<svg style="left:521px;top:25.2px" width="5" height="3" viewBox="0 0 5 3"><path d="M1.1 0.8 L2.5 2 L3.9 0.8" fill="none" stroke="#bbb" stroke-width="0.6"/></svg>
<div class="r" style="left:6px;top:36px;width:526px;height:250.3px;background:#242424"></div>
<div class="t" style="left:16px;top:45.6px;font-size:5.1px;color:#f0f0f0;font-weight:normal;font-family:'Liberation Sans', sans-serif;-webkit-text-stroke:0.12px #f0f0f0">Head unit</div>
<div class="r" style="left:12.0px;top:52.3px;width:30px;height:1.1px;background:#37689e"></div>
<div class="t" style="left:48.4px;top:45.6px;font-size:5.1px;color:#6e6e6e;font-weight:normal;font-family:'Liberation Sans', sans-serif;">Vehicle</div>
<div class="t" style="left:81px;top:45.6px;font-size:5.1px;color:#6e6e6e;font-weight:normal;font-family:'Liberation Sans', sans-serif;">Trips</div>
<div class="r" style="left:6px;top:288px;width:526px;height:90px;background:#222"></div>
<div class="t" style="left:11.9px;top:297.8px;font-size:5.8px;color:#dcdcdc;font-weight:normal;font-family:'Liberation Sans', sans-serif;-webkit-text-stroke:0.15px #dcdcdc">Message exchange with cloud</div>
<svg style="left:507.5px;top:296.8px" width="6" height="7" viewBox="0 0 6 7"><path d="M0.6 1.2 H5.4 M2.2 1.2 V0.5 H3.8 V1.2 M1.1 1.6 H4.9 L4.6 6.6 H1.4Z" fill="#9a9a9a" stroke="#9a9a9a" stroke-width="0.5"/></svg>
<svg style="left:520px;top:297px" width="6" height="7" viewBox="0 0 6 7"><path d="M0.4 2 V0.4 H2 M4 0.4 H5.6 V2 M5.6 5 V6.6 H4 M2 6.6 H0.4 V5" fill="none" stroke="#9a9a9a" stroke-width="0.7"/></svg>
<div class="r" style="left:12.3px;top:312.4px;width:513.3px;height:59.6px;background:#161616;overflow:hidden"></div>
<div class="r" style="left:12.3px;top:312.4px;width:513.3px;height:2.2px;background:#1c1c1c"></div>
<div class="log" style="left:15.7px;top:316.30px;width:506px;overflow:hidden"><span class="g">[2019-06-21 10:17:52]:</span> <span class="pu">{</span><span class="k">"header"</span><span class="pu">:</span> <span class="pu">{</span><span class="k">"requestid"</span><span class="pu">:</span> "ZZTEST2WF20190619_1560909694377",<span class="k">"ackRequired"</span><span class="pu">:</span> <span class="b">false</span>,<span class="k">"imei"</span><span class="pu">:</span> 353386064467554,<span class="k">"imsi"</span><span class="pu">:</span> 111111,<span class="k">"vin"</span><span class="pu">:</span> "ZZTEST2WF2019061…</div>
<div class="log" style="left:15.7px;top:328.95px;width:506px;overflow:hidden"><span class="g">[2019-06-21 10:17:50]:</span> <span class="pu">{</span><span class="k">"header"</span><span class="pu">:</span> <span class="pu">{</span><span class="k">"requestid"</span><span class="pu">:</span> "ZZTEST2WF20190619_1560909694377",<span class="k">"ackRequired"</span><span class="pu">:</span> <span class="b">false</span>,<span class="k">"imei"</span><span class="pu">:</span> 353386064467554,<span class="k">"imsi"</span><span class="pu">:</span> 111111,<span class="k">"vin"</span><span class="pu">:</span> "ZZTEST2WF2019061…</div>
<div class="log" style="left:15.7px;top:341.60px;width:506px;overflow:hidden"><span class="g">[2019-06-21 10:17:47]:</span> <span class="pu">{</span><span class="k">"header"</span><span class="pu">:</span> <span class="pu">{</span><span class="k">"requestid"</span><span class="pu">:</span> "ZZTEST2WF20190619_1560909694377",<span class="k">"ackRequired"</span><span class="pu">:</span> <span class="b">false</span>,<span class="k">"imei"</span><span class="pu">:</span> 353386064467554,<span class="k">"imsi"</span><span class="pu">:</span> 111111,<span class="k">"vin"</span><span class="pu">:</span> "ZZTEST2WF2019061…</div>
<div class="log" style="left:15.7px;top:354.25px;width:506px;overflow:hidden"><span class="g">[2019-06-21 10:17:42]:</span> <span class="pu">{</span><span class="k">"header"</span><span class="pu">:</span> <span class="pu">{</span><span class="k">"requestid"</span><span class="pu">:</span> "ZZTEST2WF20190619_1560909694377",<span class="k">"ackRequired"</span><span class="pu">:</span> <span class="b">false</span>,<span class="k">"imei"</span><span class="pu">:</span> 353386064467554,<span class="k">"imsi"</span><span class="pu">:</span> 111111,<span class="k">"vin"</span><span class="pu">:</span> "ZZTEST2WF2019061…</div>
<div class="log" style="left:15.7px;top:366.90px;width:506px;overflow:hidden"><span class="g">[2019-06-21 10:17:34]:</span> <span class="pu">{</span><span class="k">"header"</span><span class="pu">:</span> <span class="pu">{</span><span class="k">"requestid"</span><span class="pu">:</span> "ZZTEST2WF20190619_1560909694377",<span class="k">"ackRequired"</span><span class="pu">:</span> <span class="b">false</span>,<span class="k">"imei"</span><span class="pu">:</span> 353386064467554,<span class="k">"imsi"</span><span class="pu">:</span> 111111,<span class="k">"vin"</span><span class="pu">:</span> "ZZTEST2WF2019061…</div>
<div class="r" style="left:12.3px;top:369.5px;width:513.3px;height:2.5px;background:#161616"></div>
<div class="r" style="left:6px;top:372px;width:526px;height:6px;background:#222"></div>
<div class="r" style="left:12px;top:59px;width:429px;height:221.4px;background:linear-gradient(104.5deg,#0a2337 0%,#0e1d36 14%,#121831 30%,#151329 50%,#1d0c26 62%,#26072a 74%,#1a0419 82%,#040004 90%,#000 100%)"></div>
<svg style="left:27px;top:74px" width="15" height="15" viewBox="0 0 15 15"><circle cx="7.5" cy="7.5" r="7.3" fill="#d8232a"/><path d="M2.2 3.2 Q7.5 -1.4 12.8 3.2 Z" fill="#1d2fd0"/><path d="M2.6 3.4 L7.5 13 L12.4 3.4 L7.5 6.2 Z" fill="#fff"/></svg>
<div class="t" style="left:47.6px;top:83.78px;font-size:6.3px;color:#e0e0e0;font-weight:normal;font-family:'Liberation Mono', monospace;letter-spacing:-0.45px">V-1.02</div>
<div class="t" style="left:195.2px;top:77.96px;font-size:13.4px;color:#ececec;font-weight:normal;font-family:'Liberation Mono', monospace;transform:scaleX(0.875);transform-origin:0 0;">2021-02-19</div>
<div class="t" style="left:277.4px;top:77.82px;font-size:12.9px;color:#ececec;font-weight:normal;font-family:'Liberation Sans', sans-serif;">Friday</div>
<div class="t" style="left:350.8px;top:73.65px;font-size:17.3px;color:#e6e6e6;font-weight:normal;font-family:'Liberation Sans', sans-serif;">15:58</div>
<svg style="left:412.5px;top:74px" width="15" height="14" viewBox="0 0 15 14"><rect x="0.3" y="10.0" width="1.7" height="3.8" fill="#f2f2f2"/><rect x="3.3" y="7.7" width="1.7" height="6.1" fill="#f2f2f2"/><rect x="6.3" y="5.4" width="1.7" height="8.4" fill="#f2f2f2"/><rect x="9.3" y="3.1" width="1.7" height="10.7" fill="#f2f2f2"/><rect x="12.3" y="0.8" width="1.7" height="13.0" fill="#f2f2f2"/></svg>
<div class="r" style="left:41px;top:115.6px;width:80px;height:69.4px;background:rgba(255,255,255,0.09);border:0.8px solid rgba(255,255,255,0.16);border-radius:1.5px"></div>
<svg style="left:72px;top:134px" width="18" height="18" viewBox="0 0 18 18"><path d="M1 3 L6 1 L12 3 L17 1 L17 15 L12 17 L6 15 L1 17 Z M6 1 V15 M12 3 V17" fill="none" stroke="#e8e8e8" stroke-width="1.1" stroke-linejoin="round"/></svg>
<div class="t" style="left:81px;top:160.80px;font-size:9.2px;color:#e4e4e4;font-weight:normal;font-family:'Liberation Sans', sans-serif;transform:translateX(-50%)">Navigation</div>
<div class="r" style="left:138.3px;top:115.6px;width:80px;height:69.4px;background:rgba(255,255,255,0.09);border:0.8px solid rgba(255,255,255,0.16);border-radius:1.5px"></div>
<svg style="left:169.3px;top:134px" width="18" height="18" viewBox="0 0 18 18"><path d="M6 1.5 L3.5 2.5 Q1.8 4 3.2 8.5 Q5.5 14 10.5 16 Q12.8 16.8 13.8 14.8 L11.5 12 L9.8 12.8 Q7 11 5.8 7 L7.5 5.5 Z" fill="none" stroke="#e8e8e8" stroke-width="1.1" stroke-linejoin="round"/></svg>
<div class="t" style="left:178.3px;top:160.80px;font-size:9.2px;color:#e4e4e4;font-weight:normal;font-family:'Liberation Sans', sans-serif;transform:translateX(-50%)">Phone</div>
<div class="r" style="left:235px;top:115.6px;width:80px;height:69.4px;background:rgba(255,255,255,0.09);border:0.8px solid rgba(255,255,255,0.16);border-radius:1.5px"></div>
<svg style="left:266px;top:134px" width="18" height="18" viewBox="0 0 18 18"><path d="M9 6 V17 M7 4 H11 V8 H7 Z M5 3 Q3.5 6 5 9 M13 3 Q14.5 6 13 9 M3 1.5 Q0.5 6 3 10.5 M15 1.5 Q17.5 6 15 10.5" fill="none" stroke="#e8e8e8" stroke-width="1.1"/></svg>
<div class="t" style="left:275px;top:160.80px;font-size:9.2px;color:#e4e4e4;font-weight:normal;font-family:'Liberation Sans', sans-serif;transform:translateX(-50%)">Radio</div>
<div class="r" style="left:332px;top:115.6px;width:80px;height:69.4px;background:rgba(255,255,255,0.09);border:0.8px solid rgba(255,255,255,0.16);border-radius:1.5px"></div>
<svg style="left:363px;top:134px" width="18" height="18" viewBox="0 0 18 18"><g transform="translate(9 9)" fill="none" stroke="#e8e8e8" stroke-width="1.1"><circle r="2.6"/><polygon points="8.00,0.00 7.93,1.04 5.99,1.60 5.73,2.37 5.37,3.10 6.35,4.87 5.66,5.66 4.87,6.35 3.10,5.37 2.37,5.73 1.60,5.99 1.04,7.93 0.00,8.00 -1.04,7.93 -1.60,5.99 -2.37,5.73 -3.10,5.37 -4.87,6.35 -5.66,5.66 -6.35,4.87 -5.37,3.10 -5.73,2.37 -5.99,1.60 -7.93,1.04 -8.00,0.00 -7.93,-1.04 -5.99,-1.60 -5.73,-2.37 -5.37,-3.10 -6.35,-4.87 -5.66,-5.66 -4.87,-6.35 -3.10,-5.37 -2.37,-5.73 -1.60,-5.99 -1.04,-7.93 -0.00,-8.00 1.04,-7.93 1.60,-5.99 2.37,-5.73 3.10,-5.37 4.87,-6.35 5.66,-5.66 6.35,-4.87 5.37,-3.10 5.73,-2.37 5.99,-1.60 7.93,-1.04" stroke-linejoin="round"/></g></svg>
<div class="t" style="left:372px;top:160.80px;font-size:9.2px;color:#e4e4e4;font-weight:normal;font-family:'Liberation Sans', sans-serif;transform:translateX(-50%)">Settings</div>
<div class="r" style="left:41px;top:199px;width:80px;height:68.8px;background:rgba(255,255,255,0.035);border:0.8px solid rgba(255,255,255,0.03);border-radius:1.5px"></div>
<svg style="left:72px;top:217px" width="18" height="18" viewBox="0 0 18 18"><g fill="none" stroke="#50566c" stroke-width="1.1"><circle cx="9" cy="9" r="8.3"/><ellipse cx="9" cy="9" rx="3.5" ry="8"/><path d="M1 9 H17 M2.5 4.8 H15.5 M2.5 13.2 H15.5 M9 1 V17"/></g></svg>
<div class="t" style="left:81px;top:243.46px;font-size:8.8px;color:#454a5e;font-weight:normal;font-family:'Liberation Sans', sans-serif;transform:translateX(-50%)">Internet service</div>
<svg style="left:463.2px;top:105.5px" width="48" height="48" viewBox="0 0 48 48"><defs><radialGradient id="ssg" cx="50%" cy="45%" r="55%"><stop offset="0" stop-color="#3a3a3a"/><stop offset="0.7" stop-color="#202020"/><stop offset="1" stop-color="#141414"/></radialGradient><linearGradient id="ssr" x1="0" y1="0" x2="1" y2="1"><stop offset="0" stop-color="#9a9a9a"/><stop offset="0.5" stop-color="#d0d0d0"/><stop offset="1" stop-color="#8a8a8a"/></linearGradient></defs><circle cx="23.8" cy="23.8" r="22.7" fill="none" stroke="url(#ssr)" stroke-width="2.2"/><circle cx="23.8" cy="23.8" r="21.2" fill="url(#ssg)"/></svg>
<div class="r" style="left:483.2px;top:115.4px;width:7.8px;height:2.2px;background:#52e06a;border-radius:1px;box-shadow:0 0 2.5px #3ee05a"></div>
<div class="t" style="left:487px;top:122.10px;font-size:5.4px;color:#e8e8e8;font-weight:normal;font-family:'Liberation Sans', sans-serif;transform:translateX(-50%)">START</div>
<div class="r" style="left:479.5px;top:129.5px;width:15px;height:0.6px;background:#aaa"></div>
<div class="t" style="left:487px;top:131.50px;font-size:5.4px;color:#e8e8e8;font-weight:normal;font-family:'Liberation Sans', sans-serif;transform:translateX(-50%)">STOP</div>
<div class="t" style="left:487px;top:139.72px;font-size:4.5px;color:#d8d8d8;font-weight:normal;font-family:'Liberation Sans', sans-serif;transform:translateX(-50%)">Engine</div>
<div class="r" style="left:453.9px;top:242.2px;width:66.2px;height:39.2px;border:0.8px solid #353535"></div>
<div class="t" style="left:462.8px;top:250.81px;font-size:4.5px;color:#c8c8c8;font-weight:normal;font-family:'Liberation Sans', sans-serif;letter-spacing:-0.05px">Demo control</div>
<div class="btn" style="left:463.1px;top:261px;width:48.1px;height:11px;border-color:#b8b8b8;color:#e0e0e0;font-size:4.3px"><span>Reset activation</span></div>
</div>
</body></html>
